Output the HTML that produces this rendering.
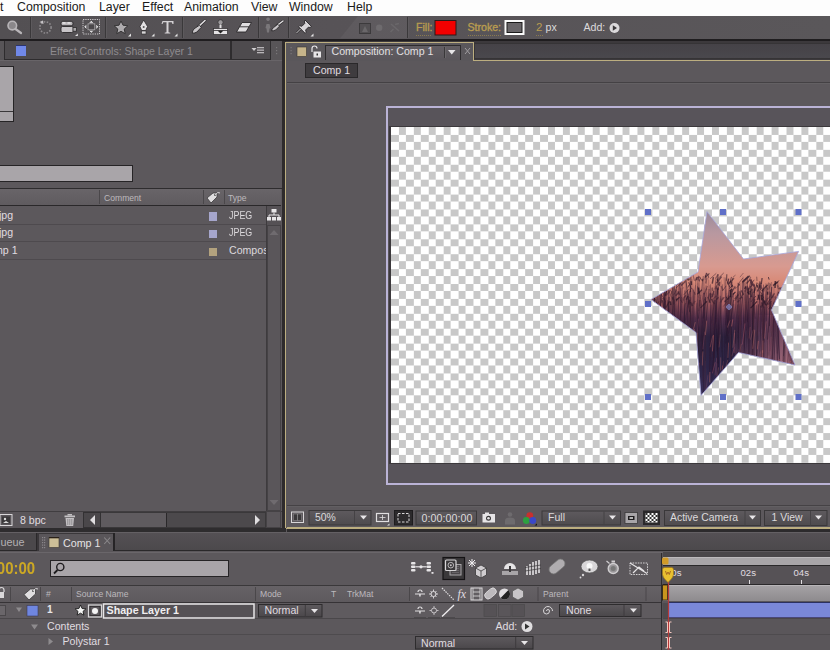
<!DOCTYPE html>
<html><head><meta charset="utf-8">
<style>
*{margin:0;padding:0;box-sizing:border-box}
html,body{width:830px;height:650px;overflow:hidden;background:#5c585c;font-family:"Liberation Sans",sans-serif}
.a{position:absolute}
.t{position:absolute;white-space:nowrap;line-height:1}
</style></head><body>
<!-- MENU -->
<div class="a" style="left:0;top:0;width:830px;height:16px;background:#fdfdfd"></div>
<div class="t" style="left:0px;top:1.3px;font-size:12.3px;color:#1a1a1a">t</div>
<div class="t" style="left:17px;top:1.3px;font-size:12.3px;color:#1a1a1a">Composition</div>
<div class="t" style="left:99px;top:1.3px;font-size:12.3px;color:#1a1a1a">Layer</div>
<div class="t" style="left:142px;top:1.3px;font-size:12.3px;color:#1a1a1a">Effect</div>
<div class="t" style="left:184px;top:1.3px;font-size:12.3px;color:#1a1a1a">Animation</div>
<div class="t" style="left:251px;top:1.3px;font-size:12.3px;color:#1a1a1a">View</div>
<div class="t" style="left:289px;top:1.3px;font-size:12.3px;color:#1a1a1a">Window</div>
<div class="t" style="left:347px;top:1.3px;font-size:12.3px;color:#1a1a1a">Help</div>

<!-- TOOLBAR -->
<div class="a" style="left:0;top:16px;width:830px;height:23px;background:linear-gradient(90deg,#535053,#575357 40%,#5a575a)"></div>
<div class="a" style="left:0;top:38.5px;width:830px;height:3px;background:#1f1d1f"></div>
<svg class="a" style="left:0;top:16px" width="830" height="23" viewBox="0 16 830 23">
<g fill="none" stroke="#3a383a" stroke-width="1">
<line x1="30.5" y1="17" x2="30.5" y2="38"/><line x1="105.5" y1="17" x2="105.5" y2="38"/>
<line x1="182.5" y1="17" x2="182.5" y2="38"/><line x1="258.5" y1="17" x2="258.5" y2="38"/>
<line x1="288.5" y1="17" x2="288.5" y2="38"/><line x1="407.5" y1="17" x2="407.5" y2="38"/>
</g>
<g fill="none" stroke="#5d5a5d" stroke-width="1">
<line x1="31.5" y1="17" x2="31.5" y2="38"/><line x1="106.5" y1="17" x2="106.5" y2="38"/>
<line x1="183.5" y1="17" x2="183.5" y2="38"/><line x1="259.5" y1="17" x2="259.5" y2="38"/>
<line x1="289.5" y1="17" x2="289.5" y2="38"/><line x1="408.5" y1="17" x2="408.5" y2="38"/>
</g>
<!-- magnifier -->
<circle cx="12.3" cy="25.6" r="4.3" fill="#8a878a" stroke="#b8b5b8" stroke-width="1.6"/>
<line x1="15.5" y1="29" x2="21" y2="33" stroke="#b8b5b8" stroke-width="2.2" stroke-linecap="round"/>
<!-- rotate -->
<circle cx="45.5" cy="27.4" r="5.6" fill="none" stroke="#8d8a8d" stroke-width="1.6" stroke-dasharray="1.5 1.5"/>
<path d="M39.5 22 l3.5 -1.5 l0.5 3.5z" fill="#c8c5c8"/>
<!-- camera -->
<rect x="61" y="21.3" width="12" height="4.5" rx="1.8" fill="#b8b5b8" stroke="#2a282a" stroke-width="0.9"/>
<rect x="62.5" y="22.2" width="3" height="1.5" fill="#e8e6e8"/><rect x="67.5" y="22.2" width="3" height="1.5" fill="#e8e6e8"/>
<rect x="61" y="26.5" width="12.3" height="6" rx="1.5" fill="#c8c5c8" stroke="#2a282a" stroke-width="0.9"/>
<path d="M73 27.5 h3.5 v3.8 h-3.5z" fill="#a8a5a8" stroke="#2a282a" stroke-width="0.8"/>
<path d="M75 36 l2.8 -2.6 v2.6z" fill="#e6e4e6"/>
<!-- pan behind -->
<rect x="83" y="19.5" width="16.5" height="14.5" fill="none" stroke="#c8c5c8" stroke-width="1" stroke-dasharray="1.3 1"/>
<path d="M91.3 20.3 l3 3 h-6z M91.3 33.3 l3 -3 h-6z M83.8 26.8 l3 -3 v6z M98.8 26.8 l-3 -3 v6z" fill="#dcdadc" stroke="#2a282a" stroke-width="0.6"/>
<rect x="88" y="23.8" width="6.8" height="6" fill="#4a474a" stroke="#a8a5a8" stroke-width="0.9"/>
<!-- star -->
<path d="M121 21 l2 4.2 4.8 0.6 -3.6 3.2 1 4.7 -4.2 -2.4 -4.2 2.4 1 -4.7 -3.6 -3.2 4.8 -0.6z" fill="#aeabae" stroke="#2e2c2e" stroke-width="0.9"/>
<path d="M128 36.5 l3 -3 v3z" fill="#e6e6e6"/>
<!-- pen -->
<path d="M143.7 20 l3.8 6.5 -1.8 4 h-4 l-1.8 -4z" fill="#e2e0e2" stroke="#2e2c2e" stroke-width="0.8"/>
<rect x="141.5" y="31" width="4.5" height="3" fill="#d8d6d8" stroke="#2e2c2e" stroke-width="0.6"/>
<circle cx="143.7" cy="27" r="1" fill="#555"/>
<path d="M151.5 36.5 l3 -3 v3z" fill="#e6e6e6"/>
<!-- T -->
<path d="M162.5 21 h11 v3 h-1 l-0.8 -1.8 h-3.2 v10 l1.8 0.6 v0.8 h-5.6 v-0.8 l1.8 -0.6 v-10 h-3.2 l-0.8 1.8 h-1z" fill="#d5d2d5"/>
<path d="M174.5 36.5 l3 -3 v3z" fill="#e6e6e6"/>
<polygon points="340,38.5 358,16 407,16 407,38.5" fill="#ffffff" opacity="0.045"/>
<!-- brush -->
<line x1="198.5" y1="26.5" x2="205" y2="20.5" stroke="#2a282a" stroke-width="2.8" stroke-linecap="round"/>
<line x1="198.5" y1="26.5" x2="205" y2="20.5" stroke="#e0dee0" stroke-width="1.7" stroke-linecap="round"/>
<path d="M199.3 25.3 l2 2 -4.5 4.8 q-2.8 1.5 -4.5 1 q-0.2 -2 1.8 -4.3z" fill="#c8c5c8" stroke="#2a282a" stroke-width="0.9"/>
<!-- stamp -->
<circle cx="220.5" cy="22.3" r="2.6" fill="#9c999c" stroke="#2e2c2e" stroke-width="0.7"/>
<rect x="219.5" y="24.5" width="2" height="4" fill="#e0dee0"/>
<rect x="213.5" y="28.5" width="14" height="6" fill="#e4e2e4" stroke="#2e2c2e" stroke-width="0.7"/>
<path d="M217.5 30.5 h6 l-3 3z" fill="#222"/>
<line x1="213.5" y1="30.5" x2="227.5" y2="30.5" stroke="#2e2c2e" stroke-width="0.8"/>
<!-- eraser -->
<path d="M242 22.5 h9.5 l-5.5 9.5 h-9.5z" fill="#e0dee0" stroke="#2a282a" stroke-width="0.9"/>
<line x1="239.7" y1="26.8" x2="249" y2="26.8" stroke="#2a282a" stroke-width="0.9"/>
<!-- roto brush -->
<path d="M268 21 a1.8 1.8 0 1 1 0.1 0 M266.5 24 h3 l1 4 -1 0.5 -0.5 4 h-2 l-0.5 -4 -1 -0.5z" fill="#7a777a"/>
<line x1="277" y1="25.5" x2="283" y2="21" stroke="#2a282a" stroke-width="2.6" stroke-linecap="round"/>
<line x1="277" y1="25.5" x2="283" y2="21" stroke="#e0dee0" stroke-width="1.5" stroke-linecap="round"/>
<path d="M277.8 24.3 l1.8 1.8 -3.8 3.8 q-2.4 1.2 -4.2 0.9 q0 -1.6 2 -3.3z" fill="#c8c5c8" stroke="#2a282a" stroke-width="0.9"/>
<!-- pin -->
<path d="M305 20 l6.5 6.5 -1.6 1.1 -1.3 -0.6 -3 3 0.6 2.2 -1.1 1.1 -6.5 -6.5 1.1 -1.1 2.2 0.6 3 -3 -0.6 -1.3z" fill="#d8d5d8" stroke="#2a282a" stroke-width="0.9"/>
<line x1="300.5" y1="29" x2="296.5" y2="33" stroke="#2a282a" stroke-width="2"/><line x1="300.5" y1="29" x2="296.5" y2="33" stroke="#d8d5d8" stroke-width="1"/>
<path d="M310.5 36.5 l3 -3 v3z" fill="#e6e6e6"/>
<!-- dim icons -->
<rect x="359.5" y="23.5" width="11" height="10" fill="#535053" stroke="#3c3a3c" stroke-width="1"/>
<path d="M362 32 l3 -6 3 6z" fill="#6a676a"/>
<circle cx="379.2" cy="27.8" r="3.2" fill="#6e6b6e"/>
<path d="M391 24 l8 7 M390.5 32 l3 -3 M395 24.5 l4 -1" stroke="#6a676a" stroke-width="1.6" fill="none"/>
<!-- fill / stroke -->
<rect x="435" y="20.5" width="21" height="14.5" fill="#f20000" stroke="#2a1a1a" stroke-width="1"/>
<rect x="504.5" y="20" width="20" height="15" fill="#fafafa"/>
<rect x="507" y="22.5" width="15" height="10" fill="#686568" stroke="#1a1a1a" stroke-width="1"/>
<circle cx="614.5" cy="28" r="5" fill="#dcdadc"/>
<path d="M612.8 25.2 l4.2 2.8 -4.2 2.8z" fill="#3a383a"/>
<line x1="416" y1="35.5" x2="432" y2="35.5" stroke="#8a7a50" stroke-width="1" stroke-dasharray="1 1"/>
<line x1="468" y1="35.5" x2="501" y2="35.5" stroke="#8a7a50" stroke-width="1" stroke-dasharray="1 1"/>
<line x1="536" y1="35.5" x2="543" y2="35.5" stroke="#8a7a50" stroke-width="1" stroke-dasharray="1 1"/>
</svg>
<div class="t" style="left:416px;top:22px;font-size:10.6px;color:#b89c50;-webkit-text-stroke:0.35px #b89c50">Fill:</div>
<div class="t" style="left:467.5px;top:22px;font-size:10.6px;color:#b89c50;-webkit-text-stroke:0.35px #b89c50">Stroke:</div>
<div class="t" style="left:536px;top:22px;font-size:11.5px;color:#b89c50">2</div>
<div class="t" style="left:545.5px;top:22px;font-size:10.6px;color:#dcdadc">px</div>
<div class="t" style="left:583.5px;top:22px;font-size:10.6px;color:#dcdadc">Add:</div>

<!-- LEFT PANEL -->
<div class="a" style="left:0;top:41px;width:282px;height:487px;background:#5c585c"></div>
<div class="a" style="left:0;top:41px;width:282px;height:19px;background:#585558"></div>
<div class="a" style="left:0;top:60px;width:282px;height:1px;background:#686468"></div>
<div class="a" style="left:4px;top:41.4px;width:227px;height:18.5px;background:#4e4b4e;border:1px solid #2e2c2e;border-top:none"></div>
<div class="a" style="left:16px;top:45px;width:9.5px;height:11px;background:#7088e8;border-top:1.8px solid #2a3470"></div>
<div class="t" style="left:50px;top:45.5px;font-size:10.5px;color:#8f8b8f">Effect Controls: Shape Layer 1</div>
<div class="a" style="left:231px;top:41.4px;width:40px;height:18.5px;background:#4e4b4e;border:1px solid #2e2c2e;border-top:none"></div>
<svg class="a" style="left:0;top:41px" width="282" height="19" viewBox="0 41 282 19">
<path d="M251.5 48 h5 l-2.5 3z" fill="#d0ced0"/>
<rect x="257" y="47" width="7" height="1.3" fill="#b8b5b8"/><rect x="257" y="49.5" width="7" height="1.3" fill="#b8b5b8"/><rect x="257" y="52" width="7" height="1.3" fill="#b8b5b8"/>
<g fill="#7a777a"><rect x="276" y="47" width="1.2" height="1.2"/><rect x="276" y="50" width="1.2" height="1.2"/><rect x="276" y="53" width="1.2" height="1.2"/></g>
</svg>
<!-- light boxes -->
<div class="a" style="left:-2px;top:66px;width:16px;height:56px;background:#a9a5a9;border:1px solid #262426"></div>
<div class="a" style="left:0;top:111px;width:13px;height:1px;background:#3a383a"></div>
<div class="a" style="left:-2px;top:164.5px;width:135px;height:17.5px;background:#a9a5a9;border:1px solid #262426"></div>
<!-- column header -->
<div class="a" style="left:0;top:187.5px;width:282px;height:1.2px;background:#2e2c2e"></div>
<div class="a" style="left:0;top:188.5px;width:281px;height:17px;background:linear-gradient(#686468,#5f5b5f)"></div>
<div class="a" style="left:0;top:205.3px;width:281px;height:1.2px;background:#2a282a"></div>
<div class="a" style="left:99px;top:190px;width:1px;height:14px;background:#4a474a"></div>
<div class="a" style="left:203px;top:190px;width:1px;height:14px;background:#4a474a"></div>
<div class="a" style="left:223.5px;top:190px;width:1px;height:14px;background:#4a474a"></div>
<div class="t" style="left:104px;top:193.8px;font-size:8.6px;color:#bdb9bd">Comment</div>
<div class="t" style="left:228px;top:193.8px;font-size:8.6px;color:#bdb9bd">Type</div>
<svg class="a" style="left:204px;top:190px" width="18" height="16" viewBox="0 0 18 16">
<path d="M3 8 l6 -5 h4 v4 l-6 6z" fill="#e0dee0" stroke="#3a383a" stroke-width="0.8"/><circle cx="11" cy="5" r="1" fill="#555"/><path d="M11 5 q3 -4 5 -2" stroke="#e0dee0" fill="none" stroke-width="0.9"/>
</svg>
<!-- rows -->
<div class="a" style="left:0;top:223.5px;width:266px;height:1px;background:#4e4a4e"></div>
<div class="a" style="left:0;top:241px;width:266px;height:1px;background:#4e4a4e"></div>
<div class="a" style="left:0;top:258.5px;width:266px;height:1px;background:#4e4a4e"></div>
<div class="t" style="left:-4px;top:210px;font-size:10.6px;color:#e0dde0">.jpg</div>
<div class="t" style="left:-4px;top:227px;font-size:10.6px;color:#e0dde0">.jpg</div>
<div class="t" style="left:-6px;top:245px;font-size:10.6px;color:#e0dde0">mp 1</div>
<div class="a" style="left:208.5px;top:212px;width:8.5px;height:8.5px;background:#a6a6cc"></div>
<div class="a" style="left:208.5px;top:229.5px;width:8.5px;height:8.5px;background:#a6a6cc"></div>
<div class="a" style="left:208.5px;top:247.5px;width:8.5px;height:8.5px;background:#b3a27e"></div>
<div class="t" style="left:229px;top:210px;font-size:10.6px;color:#dcd9dc;transform:scaleX(0.84);transform-origin:0 0">JPEG</div>
<div class="t" style="left:229px;top:227px;font-size:10.6px;color:#dcd9dc;transform:scaleX(0.84);transform-origin:0 0">JPEG</div>
<div class="t" style="left:229px;top:245px;font-size:10.6px;color:#dcd9dc;width:37px;overflow:hidden">Compos</div>
<!-- v scrollbar -->
<div class="a" style="left:266px;top:206px;width:15px;height:305px;background:#555155;border-left:1px solid #3e3b3e"></div>
<div class="a" style="left:267px;top:224.5px;width:14px;height:286px;background:#5a565a;border:1px solid #454245"></div>
<svg class="a" style="left:266px;top:206px" width="16" height="305" viewBox="0 0 16 305">
<rect x="5.5" y="3" width="5" height="3.5" fill="#e8e6e8"/><path d="M8 6.5 v2.5 M3 11 v-2 h10 v2" stroke="#e8e6e8" fill="none" stroke-width="1"/>
<rect x="1" y="11" width="4" height="3.5" fill="#e8e6e8"/><rect x="6" y="11" width="4" height="3.5" fill="#e8e6e8"/><rect x="11" y="11" width="4" height="3.5" fill="#e8e6e8"/>
<path d="M3.5 29 l4.5 -5 4.5 5z" fill="#6f6b6f"/>
<path d="M3.5 294 l4.5 5 4.5 -5z" fill="#6f6b6f"/>
</svg>
<!-- bottom bar -->
<div class="a" style="left:0;top:511px;width:282px;height:1px;background:#403d40"></div>
<div class="a" style="left:0;top:512px;width:282px;height:16px;background:#5a565a"></div>
<svg class="a" style="left:0;top:512px" width="282" height="16" viewBox="0 512 282 16">
<rect x="0" y="514.5" width="12" height="11" fill="none" stroke="#dad8da" stroke-width="1"/>
<rect x="2" y="516.5" width="8" height="7" fill="#3a383a"/><circle cx="5" cy="519" r="1.2" fill="#ddd"/><path d="M3 523 l3 -2 3 2z" fill="#ddd"/>
<g fill="#c4c1c4"><rect x="64.5" y="515.5" width="10.5" height="1.8"/><rect x="67.5" y="514" width="4.5" height="1.5"/><path d="M65.5 518 h8.5 l-0.8 8 h-6.9z"/></g>
<g stroke="#7a777a" stroke-width="0.7"><line x1="67.8" y1="519" x2="67.8" y2="525"/><line x1="69.8" y1="519" x2="69.8" y2="525"/><line x1="71.8" y1="519" x2="71.8" y2="525"/></g>
</svg>
<div class="t" style="left:20px;top:515px;font-size:10.6px;color:#e0dde0">8 bpc</div>
<div class="a" style="left:82.5px;top:512px;width:183.5px;height:15.5px;background:#4c494c;border:1px solid #3a383a"></div>
<div class="a" style="left:82.5px;top:512px;width:18px;height:15.5px;background:#4a474a;border:1px solid #333133"></div>
<div class="a" style="left:101px;top:512.5px;width:65.5px;height:14.5px;background:#5f5b5f;border-right:1px solid #2a282a"></div>
<svg class="a" style="left:82px;top:512px" width="184" height="16" viewBox="82 512 184 16">
<path d="M95 515 l-5 5 5 5z" fill="#e0dee0"/><path d="M255 515 l5 5 -5 5z" fill="#e0dee0"/>
</svg>
<div class="a" style="left:266px;top:511px;width:15px;height:17px;background:#5a565a;border:1px solid #454245"></div>
<div class="a" style="left:282px;top:41px;width:3.5px;height:492px;background:#2e2b2c"></div>

<!-- COMP PANEL -->
<div class="a" style="left:286px;top:41px;width:544px;height:19px;background:#3c393c"></div>
<div class="a" style="left:474px;top:43px;width:356px;height:16px;background:linear-gradient(#454247,#4a484d)"></div>
<div class="a" style="left:285.3px;top:42px;width:188.7px;height:20px;background:#5a575b;border:1.7px solid #bcae80;border-bottom:none"></div>
<div class="a" style="left:474px;top:43px;width:356px;height:16px;border:1px solid #363436;border-right:none"></div>
<div class="a" style="left:472.5px;top:59.5px;width:358px;height:1.5px;background:#bcae80"></div>
<div class="a" style="left:285.3px;top:61px;width:545px;height:467.5px;background:#5c585c;border-left:1.7px solid #bcae80;border-bottom:1.5px solid #bcae80"></div>
<svg class="a" style="left:286px;top:42px" width="190" height="18" viewBox="286 42 190 18">
<g fill="#7a777a"><rect x="290.5" y="47" width="1.2" height="1.2"/><rect x="290.5" y="50" width="1.2" height="1.2"/><rect x="290.5" y="53" width="1.2" height="1.2"/></g>
<rect x="297" y="47" width="9.5" height="9.5" fill="#c6b48a" stroke="#3a3632" stroke-width="0.6"/>
<path d="M312 52 v-3.5 a2.5 2.5 0 0 1 5 0" fill="none" stroke="#e8e6e8" stroke-width="1.2"/>
<rect x="313.5" y="51.5" width="7.5" height="6" fill="#e8e6e8"/><rect x="316.5" y="53.5" width="1.5" height="2" fill="#333"/>
</svg>
<div class="a" style="left:324.5px;top:44.5px;width:136.5px;height:15.5px;background:linear-gradient(#625e63,#5a565b);border:1px solid #2e2c2e;border-bottom:none"></div>
<div class="t" style="left:331.5px;top:45.7px;font-size:10.6px;color:#e2e0e2">Composition: Comp 1</div>
<div class="a" style="left:444px;top:47px;width:1px;height:11px;background:#3a383a"></div>
<div class="a" style="left:445px;top:47px;width:1px;height:11px;background:#6a676a"></div>
<svg class="a" style="left:446px;top:45px" width="30" height="15" viewBox="446 45 30 15">
<path d="M448 50 h7.5 l-3.75 4.5z" fill="#e8e6e8"/>
<path d="M465 48 l5 6 M470 48 l-5 6" stroke="#a09da0" stroke-width="1"/>
</svg>
<div class="a" style="left:304.5px;top:63px;width:53.5px;height:15px;background:#3f3c3f;border:1px solid #2a282a"></div>
<div class="t" style="left:313px;top:65px;font-size:10.6px;color:#e0dde0">Comp 1</div>
<div class="a" style="left:286.5px;top:82px;width:544px;height:1px;background:#444144"></div>
<div class="a" style="left:286.5px;top:83px;width:544px;height:1px;background:#636063"></div>
<!-- frame -->
<div class="a" style="left:386px;top:105.5px;width:460px;height:379px;border:2.3px solid #bab3d6;background:#58545a"></div>
<div class="a" style="left:388.8px;top:125.5px;width:450px;height:338.5px;background:#3c393c"></div>
<div class="a" style="left:390.5px;top:127px;width:440px;height:335.6px;background-color:#fff;background-image:conic-gradient(#c8c8c8 25%,#fff 25% 50%,#c8c8c8 50% 75%,#fff 75%);background-size:14.91px 14.91px"></div>
<!-- STAR -->
<svg class="a" style="left:640px;top:200px" width="190" height="210" viewBox="640 200 190 210">
<defs>
<clipPath id="stc"><polygon points="707,211.6 743.5,259 798.6,251.4 771.5,310 795,365 738.5,352.5 701,395.5 696,332.5 651,299.5 698,272"/></clipPath>
<linearGradient id="stg" x1="0" y1="211" x2="0" y2="396" gradientUnits="userSpaceOnUse">
<stop offset="0" stop-color="#9a8a9a"/><stop offset="0.12" stop-color="#b898a0"/><stop offset="0.3" stop-color="#d89a90"/>
<stop offset="0.38" stop-color="#d88a78"/><stop offset="0.5" stop-color="#b06466"/><stop offset="0.58" stop-color="#5a3450"/><stop offset="0.68" stop-color="#2e2440"/><stop offset="0.85" stop-color="#2e2648"/><stop offset="1" stop-color="#3a3058"/>
</linearGradient>
<linearGradient id="stg2" x1="745" y1="320" x2="795" y2="365" gradientUnits="userSpaceOnUse"><stop offset="0" stop-color="#b86a80" stop-opacity="0"/><stop offset="0.5" stop-color="#b87080" stop-opacity="0.5"/><stop offset="1" stop-color="#d08890" stop-opacity="0.8"/></linearGradient>
<filter id="hb"><feGaussianBlur stdDeviation="0.5"/></filter>
</defs>
<g clip-path="url(#stc)">
<rect x="640" y="200" width="190" height="210" fill="url(#stg)"/>
<rect x="735" y="315" width="65" height="55" fill="url(#stg2)"/>
<path d="M742.7 297.5 l3.4 92.6" stroke="#2a1830" stroke-width="0.76" opacity="0.72"/><path d="M775.7 304.6 l-5.5 46.2" stroke="#3a2038" stroke-width="0.44" opacity="0.47"/><path d="M705.9 279.0 l1.3 46.2" stroke="#4a2838" stroke-width="0.57" opacity="0.38"/><path d="M672.3 299.1 l0.2 36.8" stroke="#2a1830" stroke-width="0.42" opacity="0.30"/><path d="M679.8 282.2 l2.7 108.5" stroke="#3a2038" stroke-width="0.51" opacity="0.73"/><path d="M675.6 304.1 l3.7 41.7" stroke="#4a2838" stroke-width="0.56" opacity="0.31"/><path d="M673.2 280.2 l-3.0 30.5" stroke="#1e1428" stroke-width="0.68" opacity="0.30"/><path d="M658.0 286.3 l1.0 51.0" stroke="#3a2038" stroke-width="0.45" opacity="0.51"/><path d="M656.7 304.3 l1.5 26.9" stroke="#4a2838" stroke-width="0.81" opacity="0.31"/><path d="M703.7 292.8 l-5.5 25.8" stroke="#3a2038" stroke-width="0.45" opacity="0.73"/><path d="M666.1 283.1 l-1.4 94.7" stroke="#1e1428" stroke-width="0.63" opacity="0.70"/><path d="M765.9 283.3 l2.0 88.6" stroke="#2a1830" stroke-width="0.82" opacity="0.32"/><path d="M679.7 290.9 l-4.5 55.8" stroke="#2a1830" stroke-width="0.50" opacity="0.62"/><path d="M695.5 285.2 l-5.2 40.1" stroke="#4a2838" stroke-width="0.43" opacity="0.61"/><path d="M672.6 277.4 l-0.7 108.9" stroke="#1e1428" stroke-width="0.57" opacity="0.41"/><path d="M773.6 294.9 l-5.4 60.8" stroke="#4a2838" stroke-width="0.85" opacity="0.31"/><path d="M698.8 282.0 l-0.4 108.4" stroke="#4a2838" stroke-width="0.42" opacity="0.70"/><path d="M664.2 288.6 l2.4 37.7" stroke="#3a2038" stroke-width="0.51" opacity="0.50"/><path d="M796.4 299.4 l1.3 66.5" stroke="#4a2838" stroke-width="0.61" opacity="0.43"/><path d="M785.1 287.3 l-0.7 94.9" stroke="#1e1428" stroke-width="0.45" opacity="0.72"/><path d="M675.4 290.3 l-0.5 68.8" stroke="#1e1428" stroke-width="0.63" opacity="0.33"/><path d="M753.6 297.0 l-2.4 89.6" stroke="#4a2838" stroke-width="0.74" opacity="0.43"/><path d="M688.3 304.4 l3.6 85.9" stroke="#2a1830" stroke-width="0.54" opacity="0.38"/><path d="M720.1 298.4 l-3.3 52.7" stroke="#1e1428" stroke-width="0.51" opacity="0.53"/><path d="M700.9 294.7 l2.3 87.7" stroke="#4a2838" stroke-width="0.54" opacity="0.68"/><path d="M796.4 314.0 l-0.7 69.0" stroke="#4a2838" stroke-width="0.44" opacity="0.68"/><path d="M691.0 278.3 l-1.8 82.0" stroke="#4a2838" stroke-width="0.69" opacity="0.72"/><path d="M694.0 292.0 l-3.3 98.7" stroke="#4a2838" stroke-width="0.90" opacity="0.39"/><path d="M742.9 281.2 l-4.2 89.5" stroke="#3a2038" stroke-width="0.75" opacity="0.74"/><path d="M673.2 301.9 l3.7 34.4" stroke="#4a2838" stroke-width="0.62" opacity="0.55"/><path d="M718.7 287.0 l-0.1 77.0" stroke="#2a1830" stroke-width="0.48" opacity="0.71"/><path d="M701.3 303.6 l2.7 97.7" stroke="#2a1830" stroke-width="0.73" opacity="0.55"/><path d="M731.6 284.7 l-0.9 50.1" stroke="#1e1428" stroke-width="0.87" opacity="0.43"/><path d="M772.4 293.6 l0.4 94.1" stroke="#4a2838" stroke-width="0.55" opacity="0.36"/><path d="M733.7 303.8 l0.1 107.3" stroke="#2a1830" stroke-width="0.54" opacity="0.70"/><path d="M706.0 285.5 l-0.6 102.9" stroke="#4a2838" stroke-width="0.53" opacity="0.69"/><path d="M713.2 304.3 l-1.2 66.9" stroke="#3a2038" stroke-width="0.74" opacity="0.47"/><path d="M738.6 283.5 l-1.0 108.4" stroke="#1e1428" stroke-width="0.58" opacity="0.44"/><path d="M722.7 284.3 l-4.8 65.5" stroke="#1e1428" stroke-width="0.69" opacity="0.50"/><path d="M654.1 280.0 l-1.2 58.4" stroke="#4a2838" stroke-width="0.66" opacity="0.41"/><path d="M766.8 287.5 l-4.5 47.8" stroke="#4a2838" stroke-width="0.89" opacity="0.43"/><path d="M726.8 301.0 l3.0 99.9" stroke="#1e1428" stroke-width="0.36" opacity="0.36"/><path d="M729.1 285.7 l-0.7 50.2" stroke="#3a2038" stroke-width="0.61" opacity="0.46"/><path d="M653.5 283.3 l3.2 63.7" stroke="#2a1830" stroke-width="0.84" opacity="0.55"/><path d="M713.3 299.4 l0.9 75.6" stroke="#4a2838" stroke-width="0.87" opacity="0.59"/><path d="M720.3 295.8 l3.0 86.2" stroke="#1e1428" stroke-width="0.61" opacity="0.64"/><path d="M775.1 302.2 l-3.1 61.8" stroke="#3a2038" stroke-width="0.78" opacity="0.71"/><path d="M673.1 296.2 l3.7 100.5" stroke="#2a1830" stroke-width="0.65" opacity="0.49"/><path d="M658.4 282.7 l1.9 94.7" stroke="#4a2838" stroke-width="0.71" opacity="0.31"/><path d="M796.8 315.3 l-5.5 84.6" stroke="#2a1830" stroke-width="0.81" opacity="0.40"/><path d="M756.3 282.2 l3.2 49.9" stroke="#4a2838" stroke-width="0.43" opacity="0.57"/><path d="M769.9 282.9 l-0.4 43.1" stroke="#1e1428" stroke-width="0.71" opacity="0.64"/><path d="M656.7 292.7 l2.8 88.1" stroke="#1e1428" stroke-width="0.42" opacity="0.49"/><path d="M752.2 291.6 l0.6 55.0" stroke="#1e1428" stroke-width="0.85" opacity="0.36"/><path d="M671.0 294.3 l3.1 68.0" stroke="#1e1428" stroke-width="0.66" opacity="0.58"/><path d="M657.6 282.8 l-3.2 95.8" stroke="#1e1428" stroke-width="0.89" opacity="0.66"/><path d="M716.9 287.3 l-5.8 36.2" stroke="#2a1830" stroke-width="0.54" opacity="0.56"/><path d="M661.9 279.6 l-3.6 75.5" stroke="#1e1428" stroke-width="0.83" opacity="0.52"/><path d="M664.4 291.4 l-2.2 71.1" stroke="#4a2838" stroke-width="0.82" opacity="0.73"/><path d="M751.5 283.8 l3.7 34.9" stroke="#3a2038" stroke-width="0.72" opacity="0.67"/><path d="M754.6 288.8 l-3.1 96.0" stroke="#4a2838" stroke-width="0.86" opacity="0.62"/><path d="M705.5 297.0 l-3.0 55.5" stroke="#1e1428" stroke-width="0.70" opacity="0.73"/><path d="M726.7 293.2 l1.4 73.7" stroke="#2a1830" stroke-width="0.57" opacity="0.34"/><path d="M676.3 281.7 l3.4 66.7" stroke="#4a2838" stroke-width="0.71" opacity="0.46"/><path d="M719.5 301.8 l-1.7 77.7" stroke="#3a2038" stroke-width="0.61" opacity="0.34"/><path d="M747.3 278.5 l2.7 98.9" stroke="#2a1830" stroke-width="0.61" opacity="0.55"/><path d="M690.2 280.7 l-3.6 49.4" stroke="#1e1428" stroke-width="0.62" opacity="0.31"/><path d="M696.0 277.7 l-1.4 26.8" stroke="#1e1428" stroke-width="0.82" opacity="0.37"/><path d="M692.2 295.6 l-4.4 87.0" stroke="#3a2038" stroke-width="0.46" opacity="0.31"/><path d="M747.8 294.5 l1.1 102.5" stroke="#1e1428" stroke-width="0.72" opacity="0.38"/><path d="M691.0 297.2 l-4.4 86.0" stroke="#2a1830" stroke-width="0.48" opacity="0.60"/><path d="M746.2 288.7 l-5.9 107.9" stroke="#4a2838" stroke-width="0.38" opacity="0.65"/><path d="M673.8 277.0 l2.4 96.0" stroke="#2a1830" stroke-width="0.66" opacity="0.72"/><path d="M684.0 299.3 l-1.3 32.8" stroke="#4a2838" stroke-width="0.73" opacity="0.59"/><path d="M708.4 277.7 l-1.9 46.7" stroke="#2a1830" stroke-width="0.52" opacity="0.32"/><path d="M792.4 291.1 l0.4 84.1" stroke="#1e1428" stroke-width="0.45" opacity="0.41"/><path d="M768.2 283.2 l-4.4 108.7" stroke="#2a1830" stroke-width="0.39" opacity="0.63"/><path d="M715.1 286.4 l1.7 61.0" stroke="#2a1830" stroke-width="0.64" opacity="0.36"/><path d="M786.8 293.3 l2.3 63.2" stroke="#1e1428" stroke-width="0.47" opacity="0.35"/><path d="M721.4 298.6 l-2.0 47.4" stroke="#4a2838" stroke-width="0.42" opacity="0.54"/><path d="M685.2 278.4 l-0.2 61.4" stroke="#3a2038" stroke-width="0.48" opacity="0.33"/><path d="M655.3 281.8 l-2.3 49.3" stroke="#1e1428" stroke-width="0.40" opacity="0.49"/><path d="M705.7 298.3 l-3.1 25.0" stroke="#2a1830" stroke-width="0.87" opacity="0.36"/><path d="M715.2 299.7 l3.5 80.7" stroke="#1e1428" stroke-width="0.75" opacity="0.62"/><path d="M664.2 299.4 l-2.8 72.8" stroke="#4a2838" stroke-width="0.52" opacity="0.36"/><path d="M750.7 285.4 l1.6 30.4" stroke="#2a1830" stroke-width="0.66" opacity="0.31"/><path d="M795.4 310.0 l-3.4 62.1" stroke="#4a2838" stroke-width="0.87" opacity="0.31"/><path d="M667.0 281.8 l-4.4 55.5" stroke="#2a1830" stroke-width="0.69" opacity="0.37"/><path d="M688.8 293.6 l-4.6 78.6" stroke="#4a2838" stroke-width="0.77" opacity="0.50"/><path d="M666.0 285.2 l-1.4 102.8" stroke="#3a2038" stroke-width="0.59" opacity="0.50"/><path d="M729.0 304.1 l-5.0 75.7" stroke="#2a1830" stroke-width="0.80" opacity="0.49"/><path d="M679.5 276.0 l-3.6 102.3" stroke="#4a2838" stroke-width="0.74" opacity="0.46"/><path d="M680.8 284.0 l-0.4 42.1" stroke="#3a2038" stroke-width="0.55" opacity="0.64"/><path d="M703.7 299.5 l0.6 94.2" stroke="#4a2838" stroke-width="0.85" opacity="0.33"/><path d="M708.9 280.1 l-1.1 95.7" stroke="#2a1830" stroke-width="0.37" opacity="0.38"/><path d="M762.5 287.7 l2.0 103.3" stroke="#4a2838" stroke-width="0.77" opacity="0.51"/><path d="M779.2 300.9 l-2.2 93.0" stroke="#3a2038" stroke-width="0.36" opacity="0.53"/><path d="M771.6 282.0 l0.1 82.6" stroke="#4a2838" stroke-width="0.63" opacity="0.53"/><path d="M716.4 298.8 l3.3 74.2" stroke="#3a2038" stroke-width="0.66" opacity="0.33"/><path d="M769.4 291.4 l0.8 75.5" stroke="#2a1830" stroke-width="0.64" opacity="0.43"/><path d="M652.2 298.4 l2.6 76.9" stroke="#2a1830" stroke-width="0.87" opacity="0.49"/><path d="M689.7 296.8 l1.5 31.1" stroke="#1e1428" stroke-width="0.72" opacity="0.73"/><path d="M752.5 301.8 l0.1 87.8" stroke="#2a1830" stroke-width="0.46" opacity="0.53"/><path d="M684.3 304.3 l-2.1 71.2" stroke="#3a2038" stroke-width="0.35" opacity="0.48"/><path d="M762.1 294.7 l0.8 42.6" stroke="#1e1428" stroke-width="0.53" opacity="0.45"/><path d="M685.9 278.9 l2.0 50.0" stroke="#3a2038" stroke-width="0.79" opacity="0.34"/><path d="M659.7 288.0 l0.6 40.8" stroke="#4a2838" stroke-width="0.66" opacity="0.58"/><path d="M711.4 288.3 l3.0 69.9" stroke="#1e1428" stroke-width="0.52" opacity="0.43"/><path d="M676.5 276.9 l-0.4 34.8" stroke="#3a2038" stroke-width="0.68" opacity="0.38"/><path d="M697.6 279.0 l-2.7 91.9" stroke="#3a2038" stroke-width="0.39" opacity="0.73"/><path d="M774.9 309.7 l2.5 52.1" stroke="#3a2038" stroke-width="0.70" opacity="0.72"/><path d="M783.8 301.6 l2.4 92.8" stroke="#2a1830" stroke-width="0.35" opacity="0.60"/><path d="M662.1 280.4 l-5.0 77.3" stroke="#3a2038" stroke-width="0.77" opacity="0.63"/><path d="M756.4 305.1 l0.3 106.3" stroke="#2a1830" stroke-width="0.88" opacity="0.35"/><path d="M771.8 287.0 l-4.3 52.6" stroke="#2a1830" stroke-width="0.84" opacity="0.74"/><path d="M685.4 303.3 l-5.9 64.6" stroke="#3a2038" stroke-width="0.89" opacity="0.73"/><path d="M751.9 291.8 l3.5 106.8" stroke="#1e1428" stroke-width="0.39" opacity="0.64"/><path d="M650.4 299.5 l1.5 109.9" stroke="#3a2038" stroke-width="0.46" opacity="0.45"/><path d="M692.2 290.5 l1.9 84.2" stroke="#1e1428" stroke-width="0.67" opacity="0.43"/><path d="M791.3 287.1 l-3.8 61.8" stroke="#2a1830" stroke-width="0.89" opacity="0.42"/><path d="M670.2 304.1 l-1.7 72.0" stroke="#3a2038" stroke-width="0.45" opacity="0.68"/><path d="M662.0 286.3 l-5.9 93.9" stroke="#2a1830" stroke-width="0.77" opacity="0.46"/><path d="M651.2 292.3 l2.7 106.3" stroke="#3a2038" stroke-width="0.39" opacity="0.74"/><path d="M796.1 299.1 l-5.1 65.1" stroke="#4a2838" stroke-width="0.50" opacity="0.73"/><path d="M725.2 277.5 l1.8 58.4" stroke="#2a1830" stroke-width="0.59" opacity="0.57"/><path d="M680.8 288.2 l2.1 86.5" stroke="#4a2838" stroke-width="0.80" opacity="0.49"/><path d="M650.3 299.7 l-2.6 39.2" stroke="#2a1830" stroke-width="0.52" opacity="0.39"/><path d="M799.1 293.1 l-3.3 60.8" stroke="#2a1830" stroke-width="0.61" opacity="0.43"/><path d="M764.9 302.0 l0.9 31.5" stroke="#3a2038" stroke-width="0.37" opacity="0.48"/><path d="M677.9 276.5 l3.6 95.4" stroke="#3a2038" stroke-width="0.68" opacity="0.36"/><path d="M659.7 286.6 l-5.9 77.6" stroke="#3a2038" stroke-width="0.80" opacity="0.34"/><path d="M762.6 290.3 l-4.5 90.9" stroke="#2a1830" stroke-width="0.64" opacity="0.74"/><path d="M691.1 279.1 l-3.0 59.0" stroke="#4a2838" stroke-width="0.85" opacity="0.55"/><path d="M794.8 292.9 l-3.4 73.3" stroke="#3a2038" stroke-width="0.65" opacity="0.63"/><path d="M684.1 295.3 l-5.8 29.8" stroke="#3a2038" stroke-width="0.47" opacity="0.40"/><path d="M768.5 282.3 l-5.6 67.5" stroke="#2a1830" stroke-width="0.56" opacity="0.46"/><path d="M732.8 288.7 l-4.8 33.7" stroke="#1e1428" stroke-width="0.85" opacity="0.56"/><path d="M756.4 305.5 l3.9 105.7" stroke="#2a1830" stroke-width="0.52" opacity="0.37"/><path d="M746.0 277.8 l0.2 43.0" stroke="#1e1428" stroke-width="0.40" opacity="0.53"/><path d="M774.1 285.8 l-1.1 54.8" stroke="#4a2838" stroke-width="0.66" opacity="0.39"/><path d="M654.4 297.5 l2.9 34.9" stroke="#1e1428" stroke-width="0.56" opacity="0.45"/><path d="M721.6 280.2 l-3.5 35.6" stroke="#3a2038" stroke-width="0.36" opacity="0.41"/><path d="M743.6 283.1 l2.8 47.4" stroke="#3a2038" stroke-width="0.59" opacity="0.70"/><path d="M738.3 292.4 l-2.4 101.6" stroke="#4a2838" stroke-width="0.42" opacity="0.51"/><path d="M750.5 295.9 l-1.9 27.2" stroke="#4a2838" stroke-width="0.58" opacity="0.54"/><path d="M741.0 282.4 l-4.9 105.7" stroke="#2a1830" stroke-width="0.39" opacity="0.61"/><path d="M654.5 296.8 l-0.8 50.8" stroke="#1e1428" stroke-width="0.65" opacity="0.68"/><path d="M666.3 297.9 l-3.0 47.0" stroke="#4a2838" stroke-width="0.35" opacity="0.64"/><path d="M718.8 280.5 l-3.4 43.4" stroke="#2a1830" stroke-width="0.87" opacity="0.39"/><path d="M670.8 304.8 l-1.6 79.4" stroke="#3a2038" stroke-width="0.63" opacity="0.48"/><path d="M669.1 290.2 l-1.5 83.4" stroke="#3a2038" stroke-width="0.67" opacity="0.71"/><path d="M713.9 292.3 l3.5 67.7" stroke="#3a2038" stroke-width="0.47" opacity="0.41"/><path d="M711.8 298.7 l-3.1 96.1" stroke="#1e1428" stroke-width="0.41" opacity="0.42"/><path d="M776.6 297.3 l1.1 66.4" stroke="#2a1830" stroke-width="0.40" opacity="0.67"/><path d="M699.1 279.0 l2.4 78.7" stroke="#4a2838" stroke-width="0.67" opacity="0.32"/><path d="M674.2 285.7 l-5.0 90.1" stroke="#1e1428" stroke-width="0.82" opacity="0.70"/><path d="M657.8 296.8 l2.7 59.9" stroke="#3a2038" stroke-width="0.38" opacity="0.44"/><path d="M654.0 278.7 l3.6 87.7" stroke="#2a1830" stroke-width="0.57" opacity="0.51"/><path d="M682.4 276.8 l-3.1 73.0" stroke="#1e1428" stroke-width="0.41" opacity="0.53"/><path d="M791.8 298.9 l1.7 33.7" stroke="#2a1830" stroke-width="0.41" opacity="0.54"/><path d="M747.5 295.8 l-4.9 57.3" stroke="#4a2838" stroke-width="0.52" opacity="0.50"/><path d="M654.0 301.6 l-4.7 108.4" stroke="#3a2038" stroke-width="0.71" opacity="0.38"/><path d="M697.5 299.5 l-4.6 70.0" stroke="#4a2838" stroke-width="0.38" opacity="0.72"/><path d="M694.6 292.0 l0.4 92.8" stroke="#1e1428" stroke-width="0.49" opacity="0.37"/><path d="M717.4 287.7 l-5.0 85.4" stroke="#2a1830" stroke-width="0.68" opacity="0.51"/><path d="M715.7 282.8 l0.4 46.2" stroke="#4a2838" stroke-width="0.75" opacity="0.42"/><path d="M778.3 287.4 l-4.9 84.4" stroke="#1e1428" stroke-width="0.67" opacity="0.41"/><path d="M754.1 293.5 l-3.9 72.2" stroke="#4a2838" stroke-width="0.36" opacity="0.56"/><path d="M745.1 290.2 l3.2 99.3" stroke="#1e1428" stroke-width="0.51" opacity="0.45"/><path d="M668.2 288.2 l3.8 60.2" stroke="#2a1830" stroke-width="0.42" opacity="0.59"/><path d="M648.2 303.4 l2.5 51.6" stroke="#4a2838" stroke-width="0.71" opacity="0.49"/><path d="M699.7 297.2 l1.1 67.9" stroke="#3a2038" stroke-width="0.69" opacity="0.66"/><path d="M735.7 294.9 l-1.2 70.8" stroke="#3a2038" stroke-width="0.61" opacity="0.47"/><path d="M729.4 289.9 l-4.0 35.2" stroke="#3a2038" stroke-width="0.89" opacity="0.68"/><path d="M749.2 288.4 l-1.8 33.7" stroke="#2a1830" stroke-width="0.82" opacity="0.59"/><path d="M679.2 282.8 l3.3 30.7" stroke="#3a2038" stroke-width="0.56" opacity="0.56"/><path d="M759.8 289.8 l1.6 75.7" stroke="#2a1830" stroke-width="0.59" opacity="0.61"/><path d="M783.6 299.1 l-1.7 25.2" stroke="#3a2038" stroke-width="0.60" opacity="0.39"/><path d="M664.2 289.3 l2.0 62.3" stroke="#2a1830" stroke-width="0.61" opacity="0.53"/><path d="M764.9 300.3 l-1.3 77.1" stroke="#3a2038" stroke-width="0.69" opacity="0.57"/><path d="M651.1 301.7 l-4.0 109.1" stroke="#2a1830" stroke-width="0.39" opacity="0.45"/><path d="M729.2 301.7 l-2.0 39.6" stroke="#3a2038" stroke-width="0.37" opacity="0.33"/><path d="M758.8 290.0 l3.5 39.1" stroke="#3a2038" stroke-width="0.84" opacity="0.61"/><path d="M668.1 302.1 l3.6 37.5" stroke="#3a2038" stroke-width="0.50" opacity="0.54"/><path d="M753.4 302.6 l1.6 83.0" stroke="#4a2838" stroke-width="0.83" opacity="0.71"/><path d="M773.2 307.7 l2.3 72.7" stroke="#3a2038" stroke-width="0.75" opacity="0.63"/><path d="M697.8 283.3 l1.7 83.0" stroke="#3a2038" stroke-width="0.46" opacity="0.54"/><path d="M703.6 278.7 l-2.4 76.5" stroke="#2a1830" stroke-width="0.43" opacity="0.43"/><path d="M730.7 296.5 l1.4 105.6" stroke="#1e1428" stroke-width="0.74" opacity="0.51"/><path d="M758.4 304.4 l-2.3 66.5" stroke="#1e1428" stroke-width="0.89" opacity="0.63"/><path d="M763.1 293.5 l-1.5 93.3" stroke="#4a2838" stroke-width="0.86" opacity="0.57"/><path d="M673.9 288.4 l2.2 62.4" stroke="#2a1830" stroke-width="0.48" opacity="0.43"/><path d="M766.0 294.2 l0.5 32.1" stroke="#1e1428" stroke-width="0.52" opacity="0.34"/><path d="M709.9 285.3 l1.8 97.8" stroke="#2a1830" stroke-width="0.52" opacity="0.60"/><path d="M788.9 310.6 l2.7 90.0" stroke="#4a2838" stroke-width="0.72" opacity="0.34"/><path d="M726.0 289.6 l-4.5 62.7" stroke="#2a1830" stroke-width="0.50" opacity="0.50"/><path d="M795.4 301.1 l2.3 99.9" stroke="#4a2838" stroke-width="0.67" opacity="0.33"/><path d="M692.4 278.8 l3.5 54.4" stroke="#3a2038" stroke-width="0.40" opacity="0.45"/><path d="M702.1 279.0 l2.3 52.6" stroke="#4a2838" stroke-width="0.62" opacity="0.32"/><path d="M754.5 304.9 l2.9 75.6" stroke="#1e1428" stroke-width="0.52" opacity="0.51"/><path d="M726.0 278.7 l2.8 68.4" stroke="#4a2838" stroke-width="0.58" opacity="0.39"/><path d="M790.0 288.6 l-2.8 30.4" stroke="#4a2838" stroke-width="0.37" opacity="0.65"/><path d="M739.7 293.1 l-1.5 39.9" stroke="#2a1830" stroke-width="0.75" opacity="0.32"/><path d="M737.6 296.3 l3.2 29.1" stroke="#4a2838" stroke-width="0.51" opacity="0.43"/><path d="M747.8 277.6 l-4.4 63.8" stroke="#4a2838" stroke-width="0.53" opacity="0.61"/><path d="M775.9 300.2 l-4.2 97.0" stroke="#2a1830" stroke-width="0.61" opacity="0.44"/><path d="M664.9 301.7 l1.8 56.5" stroke="#4a2838" stroke-width="0.87" opacity="0.72"/><path d="M709.1 289.0 l-4.6 47.5" stroke="#1e1428" stroke-width="0.79" opacity="0.54"/><path d="M690.2 281.0 l3.3 60.0" stroke="#3a2038" stroke-width="0.57" opacity="0.41"/><path d="M714.5 293.8 l-3.1 63.6" stroke="#4a2838" stroke-width="0.37" opacity="0.67"/><path d="M685.0 290.5 l-1.0 74.4" stroke="#1e1428" stroke-width="0.85" opacity="0.65"/><path d="M663.1 285.8 l2.5 54.5" stroke="#2a1830" stroke-width="0.36" opacity="0.39"/><path d="M689.5 291.3 l-3.8 28.9" stroke="#3a2038" stroke-width="0.89" opacity="0.65"/><path d="M704.0 276.5 l1.6 84.4" stroke="#2a1830" stroke-width="0.41" opacity="0.61"/><path d="M685.7 277.9 l4.0 34.3" stroke="#1e1428" stroke-width="0.76" opacity="0.71"/><path d="M767.0 287.8 l-3.3 39.4" stroke="#4a2838" stroke-width="0.39" opacity="0.38"/><path d="M775.4 304.3 l-3.7 64.9" stroke="#3a2038" stroke-width="0.38" opacity="0.64"/><path d="M706.3 292.6 l-5.6 49.0" stroke="#2a1830" stroke-width="0.49" opacity="0.51"/><path d="M760.7 305.9 l-3.6 52.2" stroke="#2a1830" stroke-width="0.69" opacity="0.30"/><path d="M738.0 285.3 l-2.8 58.4" stroke="#1e1428" stroke-width="0.70" opacity="0.68"/><path d="M716.9 295.9 l-4.0 75.3" stroke="#2a1830" stroke-width="0.85" opacity="0.55"/><path d="M682.7 282.0 l-0.2 81.5" stroke="#3a2038" stroke-width="0.50" opacity="0.63"/><path d="M763.5 284.6 l0.2 76.5" stroke="#3a2038" stroke-width="0.81" opacity="0.57"/><path d="M780.5 301.3 l-5.2 83.7" stroke="#2a1830" stroke-width="0.45" opacity="0.51"/><path d="M750.8 295.7 l3.4 73.2" stroke="#2a1830" stroke-width="0.90" opacity="0.31"/><path d="M733.1 293.6 l-2.9 80.7" stroke="#1e1428" stroke-width="0.50" opacity="0.51"/><path d="M668.3 288.9 l-4.1 72.6" stroke="#2a1830" stroke-width="0.41" opacity="0.72"/><path d="M786.8 289.6 l-4.0 71.4" stroke="#1e1428" stroke-width="0.74" opacity="0.42"/><path d="M660.1 286.2 l0.2 84.1" stroke="#1e1428" stroke-width="0.36" opacity="0.40"/><path d="M770.5 292.1 l-5.3 93.7" stroke="#4a2838" stroke-width="0.57" opacity="0.74"/><path d="M749.4 297.8 l-0.6 65.6" stroke="#2a1830" stroke-width="0.77" opacity="0.73"/><path d="M678.6 298.4 l-1.0 46.9" stroke="#3a2038" stroke-width="0.45" opacity="0.49"/><path d="M788.7 305.3 l1.0 85.3" stroke="#2a1830" stroke-width="0.48" opacity="0.58"/><path d="M691.0 304.4 l-1.2 60.4" stroke="#4a2838" stroke-width="0.82" opacity="0.38"/><path d="M721.1 290.2 l-3.6 78.7" stroke="#3a2038" stroke-width="0.48" opacity="0.62"/><path d="M793.4 288.1 l0.5 91.1" stroke="#3a2038" stroke-width="0.65" opacity="0.66"/><path d="M650.1 296.2 l-4.6 82.8" stroke="#2a1830" stroke-width="0.41" opacity="0.32"/><path d="M776.0 295.0 l-4.8 40.6" stroke="#4a2838" stroke-width="0.36" opacity="0.65"/><path d="M728.8 295.4 l2.7 79.2" stroke="#4a2838" stroke-width="0.74" opacity="0.74"/><path d="M725.9 300.6 l-2.8 101.0" stroke="#2a1830" stroke-width="0.77" opacity="0.56"/><path d="M723.9 277.2 l3.3 41.2" stroke="#3a2038" stroke-width="0.50" opacity="0.43"/><path d="M715.4 277.9 l3.2 67.2" stroke="#3a2038" stroke-width="0.48" opacity="0.49"/><path d="M703.3 276.0 l-4.5 35.2" stroke="#1e1428" stroke-width="0.52" opacity="0.65"/><path d="M764.3 308.7 l-0.4 33.9" stroke="#1e1428" stroke-width="0.49" opacity="0.54"/><path d="M654.6 295.4 l-5.0 98.5" stroke="#3a2038" stroke-width="0.52" opacity="0.37"/><path d="M696.2 303.4 l3.0 28.7" stroke="#1e1428" stroke-width="0.58" opacity="0.30"/><path d="M774.8 297.2 l-5.1 58.3" stroke="#4a2838" stroke-width="0.40" opacity="0.44"/><path d="M669.1 296.9 l-2.4 78.4" stroke="#1e1428" stroke-width="0.88" opacity="0.69"/><path d="M660.6 288.4 l-1.5 69.3" stroke="#4a2838" stroke-width="0.52" opacity="0.73"/><path d="M663.0 291.1 l3.9 31.3" stroke="#4a2838" stroke-width="0.41" opacity="0.56"/><path d="M727.6 295.5 l-0.8 82.1" stroke="#2a1830" stroke-width="0.55" opacity="0.37"/><path d="M651.6 293.9 l3.6 60.1" stroke="#1e1428" stroke-width="0.61" opacity="0.55"/><path d="M785.7 291.6 l-1.1 44.3" stroke="#1e1428" stroke-width="0.49" opacity="0.42"/><path d="M798.1 299.2 l-1.3 82.1" stroke="#3a2038" stroke-width="0.38" opacity="0.38"/><path d="M712.7 300.3 l-3.9 75.4" stroke="#4a2838" stroke-width="0.48" opacity="0.33"/><path d="M675.6 288.9 l3.0 101.1" stroke="#3a2038" stroke-width="0.62" opacity="0.65"/><path d="M715.6 280.7 l-4.9 55.8" stroke="#4a2838" stroke-width="0.61" opacity="0.33"/><path d="M697.1 302.8 l3.3 96.2" stroke="#1e1428" stroke-width="0.75" opacity="0.33"/><path d="M748.2 287.4 l-0.8 51.1" stroke="#3a2038" stroke-width="0.76" opacity="0.47"/><path d="M777.2 293.5 l0.0 59.9" stroke="#3a2038" stroke-width="0.58" opacity="0.68"/><path d="M738.7 297.8 l-5.7 104.3" stroke="#3a2038" stroke-width="0.83" opacity="0.34"/><path d="M786.3 296.6 l2.9 69.7" stroke="#3a2038" stroke-width="0.72" opacity="0.35"/><path d="M704.2 287.5 l-2.2 72.9" stroke="#3a2038" stroke-width="0.52" opacity="0.40"/><path d="M710.7 284.1 l-1.1 91.4" stroke="#2a1830" stroke-width="0.44" opacity="0.70"/><path d="M763.2 289.1 l-1.0 32.4" stroke="#3a2038" stroke-width="0.88" opacity="0.34"/><path d="M740.3 290.6 l0.8 66.5" stroke="#4a2838" stroke-width="0.61" opacity="0.73"/><path d="M797.6 294.4 l3.0 79.7" stroke="#3a2038" stroke-width="0.36" opacity="0.66"/><path d="M664.1 297.9 l1.1 68.7" stroke="#2a1830" stroke-width="0.67" opacity="0.61"/><path d="M776.8 307.4 l3.4 72.6" stroke="#2a1830" stroke-width="0.73" opacity="0.70"/><path d="M754.5 284.3 l-4.2 109.1" stroke="#1e1428" stroke-width="0.67" opacity="0.59"/><path d="M754.2 283.7 l-4.4 58.6" stroke="#4a2838" stroke-width="0.68" opacity="0.52"/><path d="M760.0 288.3 l-2.7 47.5" stroke="#4a2838" stroke-width="0.89" opacity="0.60"/><path d="M740.5 298.5 l1.8 45.1" stroke="#2a1830" stroke-width="0.79" opacity="0.34"/><path d="M739.0 304.4 l2.5 77.8" stroke="#4a2838" stroke-width="0.89" opacity="0.52"/><path d="M653.6 293.4 l0.6 52.3" stroke="#3a2038" stroke-width="0.49" opacity="0.68"/><path d="M737.5 292.7 l-4.7 34.7" stroke="#3a2038" stroke-width="0.75" opacity="0.46"/><path d="M743.1 293.2 l-5.5 44.9" stroke="#2a1830" stroke-width="0.41" opacity="0.50"/><path d="M680.8 295.4 l-3.3 84.2" stroke="#3a2038" stroke-width="0.35" opacity="0.57"/><path d="M737.4 304.5 l1.3 44.4" stroke="#1e1428" stroke-width="0.59" opacity="0.56"/><path d="M664.6 280.0 l-2.3 66.2" stroke="#2a1830" stroke-width="0.71" opacity="0.68"/><path d="M746.9 294.6 l-3.3 59.7" stroke="#2a1830" stroke-width="0.73" opacity="0.47"/><path d="M711.2 304.7 l-1.4 75.1" stroke="#3a2038" stroke-width="0.61" opacity="0.49"/><path d="M697.6 286.2 l0.8 88.9" stroke="#2a1830" stroke-width="0.58" opacity="0.70"/><path d="M791.4 306.7 l-5.8 83.7" stroke="#4a2838" stroke-width="0.72" opacity="0.62"/><path d="M790.2 294.5 l0.4 81.5" stroke="#4a2838" stroke-width="0.89" opacity="0.45"/><path d="M659.3 278.2 l0.7 31.1" stroke="#4a2838" stroke-width="0.63" opacity="0.33"/><path d="M714.4 300.2 l-0.0 57.5" stroke="#2a1830" stroke-width="0.46" opacity="0.75"/><path d="M785.5 309.7 l-3.3 82.8" stroke="#4a2838" stroke-width="0.75" opacity="0.71"/><path d="M681.4 293.7 l-0.1 106.3" stroke="#3a2038" stroke-width="0.43" opacity="0.39"/><path d="M655.3 276.0 l-3.4 56.8" stroke="#2a1830" stroke-width="0.62" opacity="0.33"/><path d="M750.7 286.3 l-0.7 74.4" stroke="#2a1830" stroke-width="0.78" opacity="0.56"/><path d="M733.7 299.9 l-4.9 33.2" stroke="#2a1830" stroke-width="0.83" opacity="0.68"/><path d="M729.6 282.9 l-5.7 64.2" stroke="#2a1830" stroke-width="0.48" opacity="0.46"/><path d="M764.2 300.4 l-3.3 65.0" stroke="#4a2838" stroke-width="0.55" opacity="0.72"/><path d="M737.5 282.8 l3.3 41.4" stroke="#4a2838" stroke-width="0.84" opacity="0.36"/><path d="M743.0 276.5 l3.3 99.6" stroke="#2a1830" stroke-width="0.61" opacity="0.31"/><path d="M730.9 288.4 l-4.6 101.0" stroke="#1e1428" stroke-width="0.85" opacity="0.42"/><path d="M729.6 296.0 l-4.0 47.3" stroke="#1e1428" stroke-width="0.71" opacity="0.54"/><path d="M676.0 288.5 l-3.5 39.2" stroke="#1e1428" stroke-width="0.53" opacity="0.37"/><path d="M799.3 310.1 l3.1 107.7" stroke="#3a2038" stroke-width="0.88" opacity="0.35"/><path d="M686.8 298.4 l2.6 47.7" stroke="#3a2038" stroke-width="0.87" opacity="0.72"/><path d="M748.2 301.8 l-3.7 91.3" stroke="#1e1428" stroke-width="0.45" opacity="0.37"/><path d="M745.3 281.9 l3.5 80.9" stroke="#3a2038" stroke-width="0.37" opacity="0.45"/><path d="M704.3 292.9 l-1.3 25.4" stroke="#2a1830" stroke-width="0.84" opacity="0.73"/><path d="M799.9 309.9 l-1.0 64.1" stroke="#1e1428" stroke-width="0.87" opacity="0.55"/><path d="M774.5 298.9 l-3.9 95.1" stroke="#2a1830" stroke-width="0.58" opacity="0.41"/><path d="M785.8 294.7 l-2.3 61.4" stroke="#1e1428" stroke-width="0.90" opacity="0.39"/><path d="M765.8 287.7 l-5.2 107.6" stroke="#2a1830" stroke-width="0.39" opacity="0.47"/><path d="M667.8 300.2 l2.8 80.3" stroke="#1e1428" stroke-width="0.75" opacity="0.63"/><path d="M744.2 279.4 l3.9 49.2" stroke="#2a1830" stroke-width="0.59" opacity="0.41"/><path d="M667.6 304.2 l2.4 56.3" stroke="#3a2038" stroke-width="0.63" opacity="0.42"/><path d="M717.8 288.2 l0.1 103.6" stroke="#1e1428" stroke-width="0.50" opacity="0.45"/><path d="M672.4 287.4 l0.6 30.5" stroke="#4a2838" stroke-width="0.83" opacity="0.70"/><path d="M665.3 301.6 l-5.7 50.1" stroke="#2a1830" stroke-width="0.71" opacity="0.53"/><path d="M715.3 300.2 l-2.7 79.5" stroke="#2a1830" stroke-width="0.48" opacity="0.58"/><path d="M693.3 289.7 l0.3 59.6" stroke="#3a2038" stroke-width="0.83" opacity="0.47"/><path d="M733.4 295.4 l-3.5 45.7" stroke="#3a2038" stroke-width="0.86" opacity="0.37"/><path d="M687.5 290.2 l-3.6 63.4" stroke="#2a1830" stroke-width="0.45" opacity="0.73"/><path d="M779.7 288.0 l-0.1 92.0" stroke="#3a2038" stroke-width="0.35" opacity="0.43"/><path d="M777.2 310.5 l3.8 78.0" stroke="#2a1830" stroke-width="0.69" opacity="0.65"/><path d="M669.1 285.3 l-5.1 5.5" stroke="#3a2030" stroke-width="1.4" opacity="0.60"/><path d="M698.3 276.8 l1.1 4.7" stroke="#4a2838" stroke-width="1.5" opacity="0.72"/><path d="M713.8 291.0 l-2.0 6.6" stroke="#3a2030" stroke-width="1.3" opacity="0.73"/><path d="M690.1 273.9 l-6.2 5.9" stroke="#3a2030" stroke-width="1.4" opacity="0.59"/><path d="M717.1 279.0 l1.2 5.8" stroke="#1e1020" stroke-width="1.1" opacity="0.62"/><path d="M707.4 286.0 l-1.3 3.6" stroke="#4a2838" stroke-width="0.7" opacity="0.78"/><path d="M689.6 299.6 l-0.7 5.0" stroke="#1e1020" stroke-width="1.3" opacity="0.57"/><path d="M717.6 288.5 l-0.4 6.3" stroke="#1e1020" stroke-width="0.9" opacity="0.76"/><path d="M706.8 277.5 l-1.0 6.0" stroke="#4a2838" stroke-width="1.6" opacity="0.49"/><path d="M726.8 274.2 l-0.3 6.7" stroke="#1e1020" stroke-width="1.2" opacity="0.53"/><path d="M727.4 301.0 l-4.0 5.5" stroke="#2a1828" stroke-width="0.9" opacity="0.42"/><path d="M669.4 292.0 l1.8 4.9" stroke="#4a2838" stroke-width="0.7" opacity="0.54"/><path d="M670.2 301.3 l0.7 3.7" stroke="#2a1828" stroke-width="1.6" opacity="0.78"/><path d="M685.4 281.2 l-4.3 4.5" stroke="#4a2838" stroke-width="1.4" opacity="0.70"/><path d="M767.6 297.9 l-1.9 4.5" stroke="#3a2030" stroke-width="1.4" opacity="0.52"/><path d="M760.2 285.2 l-2.8 6.3" stroke="#3a2030" stroke-width="1.4" opacity="0.74"/><path d="M699.6 276.6 l2.0 3.8" stroke="#3a2030" stroke-width="0.9" opacity="0.82"/><path d="M778.1 281.1 l-0.3 2.1" stroke="#3a2030" stroke-width="0.7" opacity="0.55"/><path d="M755.3 287.7 l-1.4 5.2" stroke="#2a1828" stroke-width="1.1" opacity="0.81"/><path d="M767.5 284.8 l-5.8 6.4" stroke="#1e1020" stroke-width="1.5" opacity="0.63"/><path d="M758.6 297.3 l0.8 2.7" stroke="#4a2838" stroke-width="1.0" opacity="0.75"/><path d="M760.6 291.8 l3.1 6.3" stroke="#2a1828" stroke-width="0.8" opacity="0.78"/><path d="M676.2 280.7 l1.0 2.6" stroke="#2a1828" stroke-width="0.9" opacity="0.49"/><path d="M713.4 277.1 l-1.1 6.6" stroke="#1e1020" stroke-width="1.5" opacity="0.63"/><path d="M750.7 279.7 l3.4 6.6" stroke="#4a2838" stroke-width="1.7" opacity="0.75"/><path d="M738.5 294.5 l-3.8 4.7" stroke="#2a1828" stroke-width="1.2" opacity="0.59"/><path d="M677.0 298.5 l-0.4 2.9" stroke="#2a1828" stroke-width="1.2" opacity="0.61"/><path d="M741.5 290.4 l1.9 4.4" stroke="#3a2030" stroke-width="1.5" opacity="0.73"/><path d="M754.2 279.8 l-3.2 4.5" stroke="#4a2838" stroke-width="0.9" opacity="0.74"/><path d="M678.5 281.9 l-1.1 2.9" stroke="#2a1828" stroke-width="0.9" opacity="0.69"/><path d="M752.9 284.2 l-4.5 5.0" stroke="#4a2838" stroke-width="1.5" opacity="0.75"/><path d="M731.6 289.2 l-1.4 2.0" stroke="#1e1020" stroke-width="1.4" opacity="0.74"/><path d="M670.6 290.0 l-4.5 5.5" stroke="#4a2838" stroke-width="1.3" opacity="0.59"/><path d="M706.9 301.1 l-6.3 6.8" stroke="#1e1020" stroke-width="1.3" opacity="0.55"/><path d="M750.7 281.4 l-1.1 5.7" stroke="#3a2030" stroke-width="0.8" opacity="0.81"/><path d="M788.6 303.6 l0.3 3.5" stroke="#3a2030" stroke-width="0.8" opacity="0.83"/><path d="M792.1 309.1 l-3.4 3.1" stroke="#4a2838" stroke-width="0.9" opacity="0.48"/><path d="M698.1 275.7 l1.2 2.1" stroke="#3a2030" stroke-width="1.1" opacity="0.52"/><path d="M693.3 272.1 l-3.0 5.1" stroke="#3a2030" stroke-width="0.7" opacity="0.57"/><path d="M770.1 298.9 l-3.7 6.6" stroke="#2a1828" stroke-width="1.1" opacity="0.65"/><path d="M767.5 302.5 l-1.2 2.8" stroke="#4a2838" stroke-width="1.3" opacity="0.49"/><path d="M719.7 281.8 l-0.4 4.4" stroke="#2a1828" stroke-width="1.4" opacity="0.63"/><path d="M767.6 291.7 l0.0 3.0" stroke="#2a1828" stroke-width="1.6" opacity="0.76"/><path d="M677.9 291.2 l1.5 3.5" stroke="#1e1020" stroke-width="1.1" opacity="0.61"/><path d="M751.3 288.3 l-0.6 4.0" stroke="#2a1828" stroke-width="1.2" opacity="0.63"/><path d="M730.6 280.9 l2.2 6.4" stroke="#1e1020" stroke-width="1.4" opacity="0.57"/><path d="M656.4 280.4 l3.0 5.2" stroke="#1e1020" stroke-width="1.5" opacity="0.76"/><path d="M790.2 286.9 l-2.6 2.8" stroke="#4a2838" stroke-width="1.0" opacity="0.73"/><path d="M717.8 284.0 l-3.0 5.4" stroke="#3a2030" stroke-width="1.3" opacity="0.41"/><path d="M748.2 288.7 l0.4 5.5" stroke="#1e1020" stroke-width="1.6" opacity="0.55"/><path d="M656.1 286.1 l-0.1 2.1" stroke="#1e1020" stroke-width="0.8" opacity="0.69"/><path d="M753.8 284.9 l1.8 5.7" stroke="#4a2838" stroke-width="0.8" opacity="0.64"/><path d="M673.9 299.6 l-0.0 4.6" stroke="#3a2030" stroke-width="1.5" opacity="0.63"/><path d="M734.9 285.9 l0.8 3.2" stroke="#3a2030" stroke-width="0.7" opacity="0.41"/><path d="M718.1 274.4 l-2.5 4.2" stroke="#4a2838" stroke-width="1.4" opacity="0.49"/><path d="M686.8 277.3 l1.9 3.2" stroke="#1e1020" stroke-width="1.7" opacity="0.61"/><path d="M759.8 281.4 l0.6 6.7" stroke="#3a2030" stroke-width="1.5" opacity="0.59"/><path d="M723.4 297.0 l-2.7 5.6" stroke="#4a2838" stroke-width="1.2" opacity="0.67"/><path d="M712.3 287.5 l0.5 3.6" stroke="#1e1020" stroke-width="1.5" opacity="0.43"/><path d="M666.0 288.3 l-4.9 5.0" stroke="#3a2030" stroke-width="1.3" opacity="0.68"/><path d="M661.9 295.2 l3.7 6.4" stroke="#2a1828" stroke-width="0.8" opacity="0.65"/><path d="M793.8 307.7 l0.7 6.7" stroke="#2a1828" stroke-width="1.2" opacity="0.84"/><path d="M665.7 276.0 l-4.4 6.5" stroke="#1e1020" stroke-width="1.0" opacity="0.80"/><path d="M785.5 297.2 l-1.3 2.5" stroke="#2a1828" stroke-width="1.3" opacity="0.53"/><path d="M707.6 273.8 l1.1 4.0" stroke="#1e1020" stroke-width="0.8" opacity="0.71"/><path d="M791.8 282.6 l2.6 6.3" stroke="#3a2030" stroke-width="1.0" opacity="0.43"/><path d="M743.1 294.1 l-1.3 2.3" stroke="#1e1020" stroke-width="0.8" opacity="0.49"/><path d="M702.9 278.8 l-0.4 2.5" stroke="#1e1020" stroke-width="0.9" opacity="0.75"/><path d="M787.0 281.5 l-3.8 3.8" stroke="#3a2030" stroke-width="1.6" opacity="0.46"/><path d="M661.9 301.4 l-1.9 2.8" stroke="#4a2838" stroke-width="1.5" opacity="0.42"/><path d="M760.9 282.8 l0.7 6.4" stroke="#4a2838" stroke-width="1.3" opacity="0.67"/><path d="M788.0 281.8 l1.5 2.8" stroke="#3a2030" stroke-width="1.3" opacity="0.48"/><path d="M783.9 302.4 l-5.3 6.4" stroke="#4a2838" stroke-width="0.9" opacity="0.83"/><path d="M687.8 295.9 l-1.4 3.9" stroke="#2a1828" stroke-width="1.6" opacity="0.73"/><path d="M674.3 273.2 l0.5 6.5" stroke="#2a1828" stroke-width="1.2" opacity="0.42"/><path d="M676.3 290.0 l-2.4 4.8" stroke="#3a2030" stroke-width="1.0" opacity="0.50"/><path d="M707.9 297.2 l2.4 5.7" stroke="#2a1828" stroke-width="1.3" opacity="0.45"/><path d="M787.7 292.8 l0.9 6.2" stroke="#3a2030" stroke-width="1.5" opacity="0.53"/><path d="M731.5 276.9 l-1.9 6.7" stroke="#4a2838" stroke-width="0.9" opacity="0.78"/><path d="M690.4 301.8 l2.2 4.3" stroke="#2a1828" stroke-width="1.6" opacity="0.54"/><path d="M690.3 289.1 l0.2 3.0" stroke="#1e1020" stroke-width="0.9" opacity="0.57"/><path d="M771.6 301.2 l-3.7 3.3" stroke="#3a2030" stroke-width="1.5" opacity="0.66"/><path d="M766.2 286.1 l1.6 3.8" stroke="#2a1828" stroke-width="1.0" opacity="0.47"/><path d="M758.9 283.5 l1.6 6.4" stroke="#3a2030" stroke-width="1.1" opacity="0.80"/><path d="M655.5 299.2 l1.4 5.4" stroke="#1e1020" stroke-width="1.1" opacity="0.46"/><path d="M721.5 276.5 l-5.1 6.7" stroke="#4a2838" stroke-width="1.6" opacity="0.75"/><path d="M718.7 297.2 l-2.3 2.2" stroke="#1e1020" stroke-width="1.4" opacity="0.41"/><path d="M749.9 279.9 l-3.4 3.6" stroke="#3a2030" stroke-width="1.3" opacity="0.72"/><path d="M691.9 272.6 l-0.6 2.2" stroke="#2a1828" stroke-width="0.7" opacity="0.45"/><path d="M788.3 294.4 l-3.6 3.2" stroke="#2a1828" stroke-width="1.0" opacity="0.48"/><path d="M713.4 293.3 l-0.7 3.7" stroke="#4a2838" stroke-width="0.9" opacity="0.71"/><path d="M786.3 299.9 l-4.9 5.5" stroke="#2a1828" stroke-width="1.1" opacity="0.74"/><path d="M733.9 293.3 l-2.0 4.2" stroke="#4a2838" stroke-width="1.2" opacity="0.50"/><path d="M717.5 295.1 l-5.2 4.4" stroke="#3a2030" stroke-width="1.3" opacity="0.42"/><path d="M750.1 290.8 l1.3 6.4" stroke="#2a1828" stroke-width="1.7" opacity="0.61"/><path d="M742.0 296.8 l-2.5 2.4" stroke="#2a1828" stroke-width="1.6" opacity="0.53"/><path d="M662.5 298.0 l-2.4 6.1" stroke="#4a2838" stroke-width="0.9" opacity="0.73"/><path d="M783.9 303.4 l-2.3 4.6" stroke="#2a1828" stroke-width="1.5" opacity="0.63"/><path d="M779.5 305.1 l-4.4 4.5" stroke="#4a2838" stroke-width="1.3" opacity="0.40"/><path d="M762.3 298.0 l3.5 7.0" stroke="#2a1828" stroke-width="1.6" opacity="0.66"/><path d="M731.9 281.9 l-1.2 3.6" stroke="#4a2838" stroke-width="1.5" opacity="0.54"/><path d="M739.5 300.2 l-2.1 2.1" stroke="#3a2030" stroke-width="1.3" opacity="0.59"/><path d="M765.0 289.3 l-1.5 2.7" stroke="#4a2838" stroke-width="1.2" opacity="0.41"/><path d="M794.5 284.3 l0.8 3.4" stroke="#2a1828" stroke-width="1.4" opacity="0.57"/><path d="M758.2 294.7 l1.0 4.9" stroke="#2a1828" stroke-width="1.4" opacity="0.64"/><path d="M769.6 303.7 l-2.1 4.3" stroke="#4a2838" stroke-width="0.7" opacity="0.48"/><path d="M735.5 275.1 l-2.5 2.1" stroke="#2a1828" stroke-width="0.8" opacity="0.50"/><path d="M678.3 275.2 l1.1 2.1" stroke="#3a2030" stroke-width="0.7" opacity="0.77"/><path d="M734.0 278.2 l-6.4 6.4" stroke="#1e1020" stroke-width="1.4" opacity="0.51"/><path d="M671.7 290.9 l-0.4 3.5" stroke="#1e1020" stroke-width="0.7" opacity="0.73"/><path d="M791.9 293.5 l-3.0 4.9" stroke="#4a2838" stroke-width="1.4" opacity="0.81"/><path d="M777.5 281.9 l-4.4 3.7" stroke="#1e1020" stroke-width="1.4" opacity="0.69"/><path d="M681.8 282.5 l-5.8 5.6" stroke="#3a2030" stroke-width="0.7" opacity="0.76"/><path d="M791.1 299.1 l-2.4 6.9" stroke="#1e1020" stroke-width="1.6" opacity="0.61"/><path d="M723.7 273.0 l-7.0 6.8" stroke="#2a1828" stroke-width="0.9" opacity="0.56"/><path d="M693.5 272.3 l-2.1 4.0" stroke="#2a1828" stroke-width="0.7" opacity="0.52"/><path d="M726.4 296.7 l0.8 2.9" stroke="#2a1828" stroke-width="1.0" opacity="0.81"/><path d="M710.1 293.2 l1.0 2.3" stroke="#4a2838" stroke-width="1.7" opacity="0.55"/><path d="M770.8 306.7 l-2.7 2.5" stroke="#2a1828" stroke-width="0.7" opacity="0.78"/><path d="M745.7 286.4 l-0.8 2.7" stroke="#1e1020" stroke-width="1.4" opacity="0.76"/><path d="M698.5 287.5 l0.5 6.0" stroke="#2a1828" stroke-width="1.6" opacity="0.84"/><path d="M779.0 280.4 l-3.8 4.1" stroke="#2a1828" stroke-width="0.8" opacity="0.77"/><path d="M739.3 291.3 l2.4 6.7" stroke="#3a2030" stroke-width="1.6" opacity="0.45"/><path d="M661.8 276.6 l-3.2 4.2" stroke="#3a2030" stroke-width="1.4" opacity="0.76"/><path d="M770.6 284.2 l-1.8 5.0" stroke="#3a2030" stroke-width="0.8" opacity="0.49"/><path d="M685.6 295.5 l-3.0 5.9" stroke="#4a2838" stroke-width="1.1" opacity="0.64"/><path d="M688.7 282.3 l2.7 6.8" stroke="#3a2030" stroke-width="1.0" opacity="0.80"/><path d="M732.6 285.4 l-3.3 3.0" stroke="#1e1020" stroke-width="0.9" opacity="0.79"/><path d="M687.7 274.3 l-1.0 3.5" stroke="#4a2838" stroke-width="0.9" opacity="0.76"/><path d="M689.0 284.9 l-1.2 2.6" stroke="#2a1828" stroke-width="0.8" opacity="0.77"/><path d="M650.9 292.5 l-3.4 5.1" stroke="#3a2030" stroke-width="1.1" opacity="0.79"/><path d="M743.4 273.0 l-3.5 4.2" stroke="#4a2838" stroke-width="1.0" opacity="0.42"/><path d="M677.1 275.3 l-3.2 2.8" stroke="#2a1828" stroke-width="1.4" opacity="0.67"/><path d="M659.2 278.5 l-4.7 6.8" stroke="#1e1020" stroke-width="1.7" opacity="0.75"/><path d="M775.3 281.0 l-0.2 6.9" stroke="#1e1020" stroke-width="1.5" opacity="0.67"/><path d="M653.6 284.4 l1.1 3.4" stroke="#4a2838" stroke-width="1.2" opacity="0.80"/><path d="M650.3 285.1 l0.4 3.2" stroke="#1e1020" stroke-width="1.7" opacity="0.52"/><path d="M771.2 294.8 l-2.9 3.8" stroke="#3a2030" stroke-width="1.1" opacity="0.41"/><path d="M737.1 297.4 l-2.1 3.4" stroke="#1e1020" stroke-width="0.9" opacity="0.52"/><path d="M791.4 294.0 l-1.2 5.1" stroke="#3a2030" stroke-width="1.5" opacity="0.82"/><path d="M776.4 300.4 l-3.8 6.4" stroke="#2a1828" stroke-width="1.1" opacity="0.74"/><path d="M777.3 282.1 l1.4 5.1" stroke="#4a2838" stroke-width="0.9" opacity="0.46"/><path d="M777.0 284.6 l1.4 4.6" stroke="#1e1020" stroke-width="0.8" opacity="0.60"/><path d="M771.4 307.3 l2.0 6.9" stroke="#1e1020" stroke-width="1.2" opacity="0.66"/><path d="M728.6 278.7 l-0.9 5.0" stroke="#4a2838" stroke-width="1.4" opacity="0.84"/><path d="M686.7 298.2 l-1.0 5.8" stroke="#4a2838" stroke-width="1.1" opacity="0.46"/><path d="M727.1 281.4 l2.6 5.9" stroke="#3a2030" stroke-width="1.1" opacity="0.69"/><path d="M681.1 300.3 l1.2 2.8" stroke="#3a2030" stroke-width="0.8" opacity="0.84"/><path d="M678.8 292.4 l-3.2 3.3" stroke="#4a2838" stroke-width="1.6" opacity="0.80"/><path d="M747.6 291.8 l1.7 2.8" stroke="#2a1828" stroke-width="1.4" opacity="0.80"/><path d="M783.6 308.1 l-7.8 6.7" stroke="#1e1020" stroke-width="0.7" opacity="0.81"/><path d="M666.2 285.0 l-5.2 5.9" stroke="#2a1828" stroke-width="1.4" opacity="0.59"/><path d="M666.8 290.8 l-1.6 5.0" stroke="#2a1828" stroke-width="1.4" opacity="0.74"/><path d="M679.8 279.7 l1.4 5.2" stroke="#4a2838" stroke-width="0.8" opacity="0.81"/><path d="M735.2 286.7 l-3.3 4.8" stroke="#3a2030" stroke-width="1.4" opacity="0.59"/><path d="M653.2 272.0 l0.2 2.2" stroke="#3a2030" stroke-width="1.0" opacity="0.47"/><path d="M747.5 286.0 l-2.6 5.7" stroke="#4a2838" stroke-width="1.5" opacity="0.64"/><path d="M788.0 301.7 l-3.0 3.2" stroke="#4a2838" stroke-width="0.9" opacity="0.80"/><path d="M747.8 287.5 l0.4 4.7" stroke="#3a2030" stroke-width="1.2" opacity="0.80"/><path d="M779.2 303.5 l0.9 3.3" stroke="#2a1828" stroke-width="1.7" opacity="0.77"/><path d="M718.0 274.2 l-0.3 6.8" stroke="#2a1828" stroke-width="0.9" opacity="0.75"/><path d="M677.3 272.3 l1.6 4.2" stroke="#2a1828" stroke-width="0.7" opacity="0.78"/><path d="M771.1 302.6 l-0.8 6.6" stroke="#3a2030" stroke-width="1.4" opacity="0.64"/><path d="M782.0 301.5 l-0.4 4.5" stroke="#4a2838" stroke-width="1.4" opacity="0.65"/><path d="M697.1 277.2 l-0.5 3.0" stroke="#3a2030" stroke-width="1.6" opacity="0.61"/><path d="M667.4 277.2 l-6.0 5.6" stroke="#3a2030" stroke-width="0.9" opacity="0.75"/><path d="M689.6 300.4 l-0.8 6.8" stroke="#3a2030" stroke-width="0.9" opacity="0.57"/><path d="M678.8 274.4 l0.4 2.6" stroke="#3a2030" stroke-width="1.6" opacity="0.43"/><path d="M735.5 291.9 l-2.7 2.6" stroke="#2a1828" stroke-width="1.1" opacity="0.81"/><path d="M729.3 297.5 l-4.8 4.4" stroke="#2a1828" stroke-width="1.6" opacity="0.60"/><path d="M718.2 287.5 l-0.1 2.5" stroke="#3a2030" stroke-width="1.2" opacity="0.66"/><path d="M781.7 298.0 l2.1 5.4" stroke="#1e1020" stroke-width="1.3" opacity="0.69"/><path d="M749.9 275.7 l-7.7 6.7" stroke="#1e1020" stroke-width="1.5" opacity="0.56"/><path d="M691.5 277.3 l-2.6 2.6" stroke="#4a2838" stroke-width="1.5" opacity="0.51"/><path d="M660.5 283.2 l-0.4 4.2" stroke="#1e1020" stroke-width="1.6" opacity="0.45"/><path d="M724.5 297.3 l-1.9 2.6" stroke="#3a2030" stroke-width="1.0" opacity="0.48"/><path d="M652.2 279.0 l1.2 2.6" stroke="#2a1828" stroke-width="1.1" opacity="0.77"/><path d="M716.3 273.3 l-6.2 5.5" stroke="#4a2838" stroke-width="0.9" opacity="0.59"/><path d="M710.8 293.0 l-2.9 5.2" stroke="#4a2838" stroke-width="1.6" opacity="0.58"/><path d="M743.0 277.8 l-4.5 5.7" stroke="#3a2030" stroke-width="0.7" opacity="0.74"/><path d="M738.9 285.4 l-3.0 3.0" stroke="#3a2030" stroke-width="0.9" opacity="0.45"/><path d="M706.6 272.8 l-1.2 4.8" stroke="#4a2838" stroke-width="1.4" opacity="0.80"/><path d="M662.4 290.2 l-1.2 3.9" stroke="#3a2030" stroke-width="1.5" opacity="0.54"/><path d="M705.4 275.0 l-0.2 4.6" stroke="#3a2030" stroke-width="1.0" opacity="0.53"/><path d="M750.7 277.0 l-1.4 3.2" stroke="#2a1828" stroke-width="1.3" opacity="0.41"/><path d="M754.5 299.0 l-0.4 3.7" stroke="#3a2030" stroke-width="1.6" opacity="0.66"/><path d="M764.8 301.0 l-4.1 6.5" stroke="#1e1020" stroke-width="1.6" opacity="0.42"/><path d="M781.4 293.6 l-2.9 4.9" stroke="#1e1020" stroke-width="1.2" opacity="0.84"/><path d="M653.5 290.8 l-3.8 3.9" stroke="#2a1828" stroke-width="1.4" opacity="0.76"/><path d="M659.1 291.8 l1.2 2.7" stroke="#3a2030" stroke-width="1.3" opacity="0.68"/><path d="M655.5 297.1 l-0.7 5.8" stroke="#4a2838" stroke-width="1.2" opacity="0.40"/><path d="M778.6 291.7 l-0.5 6.7" stroke="#1e1020" stroke-width="1.6" opacity="0.60"/><path d="M695.4 301.0 l-6.8 7.0" stroke="#4a2838" stroke-width="1.5" opacity="0.49"/><path d="M683.9 273.7 l-6.5 6.2" stroke="#3a2030" stroke-width="0.8" opacity="0.76"/><path d="M662.0 275.3 l-5.9 6.2" stroke="#1e1020" stroke-width="1.7" opacity="0.62"/><path d="M711.3 298.9 l3.0 5.2" stroke="#1e1020" stroke-width="1.2" opacity="0.48"/><path d="M757.1 301.4 l-6.5 6.7" stroke="#1e1020" stroke-width="1.2" opacity="0.74"/><path d="M757.4 285.2 l0.5 2.5" stroke="#2a1828" stroke-width="1.6" opacity="0.74"/><path d="M686.2 295.2 l-5.6 5.7" stroke="#3a2030" stroke-width="0.8" opacity="0.66"/><path d="M771.1 292.6 l-0.8 2.4" stroke="#3a2030" stroke-width="0.8" opacity="0.43"/><path d="M773.3 296.4 l-2.8 3.3" stroke="#3a2030" stroke-width="1.3" opacity="0.43"/><path d="M787.7 284.3 l2.2 6.1" stroke="#2a1828" stroke-width="1.3" opacity="0.57"/><path d="M726.2 285.8 l-3.4 4.7" stroke="#3a2030" stroke-width="0.9" opacity="0.59"/><path d="M717.0 285.5 l-0.3 3.7" stroke="#2a1828" stroke-width="0.9" opacity="0.60"/><path d="M792.1 281.4 l-2.9 5.5" stroke="#2a1828" stroke-width="1.5" opacity="0.64"/><path d="M790.4 288.6 l-4.2 5.1" stroke="#2a1828" stroke-width="1.4" opacity="0.70"/><path d="M761.2 294.8 l0.4 5.4" stroke="#2a1828" stroke-width="1.4" opacity="0.82"/><path d="M650.7 281.2 l-3.6 4.1" stroke="#2a1828" stroke-width="1.6" opacity="0.50"/><path d="M701.9 289.7 l-4.6 4.5" stroke="#2a1828" stroke-width="1.3" opacity="0.69"/><path d="M665.1 295.2 l-0.6 2.4" stroke="#4a2838" stroke-width="1.1" opacity="0.61"/><path d="M660.6 276.8 l2.2 4.6" stroke="#2a1828" stroke-width="1.1" opacity="0.63"/><path d="M682.0 297.0 l-1.7 2.7" stroke="#4a2838" stroke-width="0.9" opacity="0.76"/><path d="M721.2 285.9 l1.5 4.8" stroke="#4a2838" stroke-width="1.5" opacity="0.54"/><path d="M781.7 287.0 l2.1 6.4" stroke="#2a1828" stroke-width="1.3" opacity="0.71"/><path d="M759.0 294.9 l-1.8 5.1" stroke="#1e1020" stroke-width="0.8" opacity="0.71"/><path d="M688.7 289.3 l-5.0 5.6" stroke="#2a1828" stroke-width="1.0" opacity="0.46"/><path d="M657.7 287.6 l1.0 2.8" stroke="#1e1020" stroke-width="1.6" opacity="0.62"/><path d="M697.6 276.8 l-2.5 4.2" stroke="#3a2030" stroke-width="1.5" opacity="0.40"/><path d="M662.8 276.7 l-4.9 6.8" stroke="#4a2838" stroke-width="0.9" opacity="0.78"/><path d="M755.9 296.0 l-5.1 6.0" stroke="#4a2838" stroke-width="1.0" opacity="0.75"/><path d="M774.5 293.3 l-3.1 4.6" stroke="#2a1828" stroke-width="1.4" opacity="0.56"/><path d="M750.5 279.4 l1.4 5.8" stroke="#4a2838" stroke-width="1.5" opacity="0.71"/><path d="M761.5 302.4 l2.5 5.8" stroke="#3a2030" stroke-width="1.5" opacity="0.64"/><path d="M663.5 287.6 l-2.2 6.1" stroke="#1e1020" stroke-width="1.4" opacity="0.50"/><path d="M699.8 292.4 l-0.8 5.1" stroke="#2a1828" stroke-width="0.9" opacity="0.49"/><path d="M730.9 290.9 l-0.6 6.3" stroke="#1e1020" stroke-width="1.4" opacity="0.80"/><path d="M752.3 289.1 l-0.8 2.1" stroke="#4a2838" stroke-width="1.2" opacity="0.76"/><path d="M704.3 298.6 l2.3 4.5" stroke="#2a1828" stroke-width="1.0" opacity="0.43"/><path d="M785.8 301.6 l-1.5 6.9" stroke="#1e1020" stroke-width="0.9" opacity="0.82"/><path d="M660.6 277.7 l-7.5 6.9" stroke="#4a2838" stroke-width="1.7" opacity="0.43"/><path d="M710.8 295.8 l-1.6 6.8" stroke="#1e1020" stroke-width="1.2" opacity="0.49"/><path d="M732.8 277.7 l-0.9 4.8" stroke="#2a1828" stroke-width="0.7" opacity="0.60"/><path d="M683.5 287.2 l-0.9 2.0" stroke="#4a2838" stroke-width="0.7" opacity="0.48"/><path d="M762.1 278.0 l-0.8 6.0" stroke="#3a2030" stroke-width="1.3" opacity="0.73"/><path d="M684.7 275.8 l-4.0 5.5" stroke="#1e1020" stroke-width="1.3" opacity="0.44"/><path d="M699.8 300.0 l-0.2 6.2" stroke="#4a2838" stroke-width="1.6" opacity="0.62"/><path d="M779.6 287.5 l3.8 6.7" stroke="#3a2030" stroke-width="1.7" opacity="0.71"/><path d="M748.6 276.1 l-5.9 5.6" stroke="#3a2030" stroke-width="1.5" opacity="0.79"/><path d="M757.3 282.8 l-1.6 5.0" stroke="#1e1020" stroke-width="1.0" opacity="0.60"/><path d="M784.5 292.9 l-0.1 2.1" stroke="#3a2030" stroke-width="1.1" opacity="0.49"/><path d="M692.9 274.7 l1.5 6.0" stroke="#4a2838" stroke-width="1.2" opacity="0.46"/><path d="M745.0 280.3 l-2.2 3.2" stroke="#4a2838" stroke-width="0.9" opacity="0.45"/><path d="M710.9 294.0 l-0.5 4.3" stroke="#4a2838" stroke-width="1.3" opacity="0.67"/><path d="M669.3 301.2 l-3.4 6.4" stroke="#1e1020" stroke-width="1.3" opacity="0.48"/><path d="M691.4 281.3 l0.1 3.6" stroke="#1e1020" stroke-width="1.4" opacity="0.65"/><path d="M692.2 288.4 l3.2 6.4" stroke="#3a2030" stroke-width="1.2" opacity="0.40"/><path d="M662.3 300.0 l1.0 6.9" stroke="#2a1828" stroke-width="1.0" opacity="0.67"/><path d="M673.3 276.0 l-2.5 5.6" stroke="#3a2030" stroke-width="1.3" opacity="0.74"/><path d="M768.4 277.1 l0.7 2.5" stroke="#1e1020" stroke-width="0.9" opacity="0.78"/><path d="M756.7 276.7 l0.3 4.2" stroke="#1e1020" stroke-width="0.8" opacity="0.52"/><path d="M774.9 296.4 l1.7 4.0" stroke="#4a2838" stroke-width="1.6" opacity="0.52"/><path d="M739.0 283.4 l-0.0 2.0" stroke="#2a1828" stroke-width="1.6" opacity="0.77"/><path d="M651.8 293.2 l1.3 4.6" stroke="#2a1828" stroke-width="1.0" opacity="0.41"/><path d="M672.5 297.2 l0.4 2.5" stroke="#2a1828" stroke-width="1.5" opacity="0.62"/><path d="M679.6 297.2 l-3.5 3.0" stroke="#1e1020" stroke-width="1.5" opacity="0.63"/><path d="M709.4 273.3 l-3.8 3.8" stroke="#1e1020" stroke-width="1.1" opacity="0.58"/><path d="M774.0 301.7 l-0.7 3.3" stroke="#3a2030" stroke-width="0.8" opacity="0.73"/><path d="M668.5 274.7 l-1.3 2.6" stroke="#4a2838" stroke-width="0.9" opacity="0.74"/><path d="M706.7 288.7 l-2.7 5.6" stroke="#3a2030" stroke-width="1.4" opacity="0.45"/><path d="M658.8 301.5 l-2.4 3.6" stroke="#3a2030" stroke-width="0.8" opacity="0.82"/><line x1="748.5" y1="362.5" x2="747.0" y2="384.1" stroke="#d07a70" stroke-width="0.7" opacity="0.51"/><line x1="779.5" y1="370.9" x2="778.9" y2="384.1" stroke="#c86a68" stroke-width="0.9" opacity="0.59"/><line x1="694.5" y1="329.1" x2="692.8" y2="345.9" stroke="#b05a70" stroke-width="0.9" opacity="0.58"/><line x1="764.9" y1="373.6" x2="762.6" y2="380.4" stroke="#b05a70" stroke-width="0.7" opacity="0.41"/><line x1="722.5" y1="365.6" x2="721.7" y2="378.0" stroke="#c86a68" stroke-width="0.6" opacity="0.55"/><line x1="745.0" y1="323.4" x2="742.3" y2="344.5" stroke="#b05a70" stroke-width="0.9" opacity="0.46"/><line x1="745.7" y1="364.5" x2="742.9" y2="380.6" stroke="#c86a68" stroke-width="0.9" opacity="0.31"/><line x1="692.0" y1="336.2" x2="691.1" y2="355.0" stroke="#d07a70" stroke-width="0.6" opacity="0.60"/><line x1="771.2" y1="336.8" x2="770.2" y2="356.0" stroke="#b05a70" stroke-width="0.6" opacity="0.36"/><line x1="691.8" y1="334.7" x2="689.9" y2="355.2" stroke="#c86a68" stroke-width="1.0" opacity="0.32"/><line x1="749.1" y1="383.0" x2="746.4" y2="393.2" stroke="#c86a68" stroke-width="0.6" opacity="0.53"/><line x1="708.0" y1="374.6" x2="705.4" y2="394.5" stroke="#b05a70" stroke-width="0.7" opacity="0.31"/><line x1="758.4" y1="340.9" x2="757.3" y2="349.4" stroke="#c86a68" stroke-width="0.9" opacity="0.50"/><line x1="723.5" y1="361.2" x2="722.5" y2="369.4" stroke="#c86a68" stroke-width="0.6" opacity="0.34"/><line x1="760.3" y1="351.6" x2="758.3" y2="361.3" stroke="#c86a68" stroke-width="0.6" opacity="0.34"/><line x1="732.8" y1="319.4" x2="731.6" y2="326.4" stroke="#c86a68" stroke-width="1.0" opacity="0.51"/><line x1="730.2" y1="320.3" x2="727.3" y2="327.6" stroke="#d07a70" stroke-width="0.6" opacity="0.51"/><line x1="786.8" y1="368.0" x2="784.5" y2="374.7" stroke="#c86a68" stroke-width="0.8" opacity="0.31"/><line x1="698.7" y1="318.5" x2="697.1" y2="333.4" stroke="#b05a70" stroke-width="0.8" opacity="0.30"/><line x1="789.4" y1="382.2" x2="787.0" y2="393.4" stroke="#c86a68" stroke-width="0.7" opacity="0.46"/><line x1="696.7" y1="367.6" x2="694.7" y2="380.6" stroke="#b05a70" stroke-width="0.7" opacity="0.35"/><line x1="692.2" y1="380.2" x2="690.8" y2="395.8" stroke="#c86a68" stroke-width="0.6" opacity="0.40"/><line x1="706.7" y1="320.7" x2="705.4" y2="335.1" stroke="#d07a70" stroke-width="1.0" opacity="0.44"/><line x1="769.7" y1="366.4" x2="767.3" y2="376.9" stroke="#d07a70" stroke-width="0.9" opacity="0.59"/><line x1="748.0" y1="366.3" x2="746.9" y2="387.1" stroke="#c86a68" stroke-width="0.6" opacity="0.40"/><line x1="795.9" y1="375.4" x2="795.0" y2="382.6" stroke="#c86a68" stroke-width="0.9" opacity="0.38"/><line x1="699.4" y1="362.8" x2="697.7" y2="371.0" stroke="#b05a70" stroke-width="0.8" opacity="0.52"/><line x1="768.8" y1="332.5" x2="768.6" y2="352.4" stroke="#b05a70" stroke-width="0.6" opacity="0.36"/><line x1="788.9" y1="370.2" x2="788.0" y2="392.1" stroke="#c86a68" stroke-width="0.7" opacity="0.56"/><line x1="797.8" y1="364.8" x2="797.5" y2="373.2" stroke="#d07a70" stroke-width="0.6" opacity="0.34"/><line x1="712.8" y1="335.7" x2="710.1" y2="347.3" stroke="#c86a68" stroke-width="0.6" opacity="0.56"/><line x1="713.6" y1="334.9" x2="712.4" y2="351.4" stroke="#c86a68" stroke-width="0.8" opacity="0.59"/><line x1="732.3" y1="363.6" x2="729.6" y2="376.6" stroke="#b05a70" stroke-width="0.7" opacity="0.36"/><line x1="786.3" y1="379.5" x2="785.4" y2="393.1" stroke="#b05a70" stroke-width="0.8" opacity="0.45"/><line x1="771.6" y1="362.8" x2="771.2" y2="376.7" stroke="#b05a70" stroke-width="0.6" opacity="0.38"/><line x1="727.9" y1="368.2" x2="725.3" y2="380.0" stroke="#b05a70" stroke-width="0.8" opacity="0.30"/><line x1="749.3" y1="384.1" x2="748.7" y2="392.0" stroke="#c86a68" stroke-width="0.6" opacity="0.41"/><line x1="782.2" y1="378.5" x2="779.9" y2="391.8" stroke="#d07a70" stroke-width="0.7" opacity="0.30"/><line x1="744.1" y1="370.0" x2="742.4" y2="378.0" stroke="#d07a70" stroke-width="0.7" opacity="0.59"/><line x1="709.9" y1="371.9" x2="709.7" y2="382.4" stroke="#d07a70" stroke-width="1.0" opacity="0.45"/><line x1="779.5" y1="359.3" x2="778.5" y2="367.0" stroke="#d07a70" stroke-width="0.8" opacity="0.46"/><line x1="753.3" y1="329.6" x2="750.3" y2="339.8" stroke="#d07a70" stroke-width="0.6" opacity="0.33"/><line x1="785.1" y1="384.9" x2="783.3" y2="397.3" stroke="#b05a70" stroke-width="1.0" opacity="0.31"/><line x1="692.4" y1="374.2" x2="691.4" y2="387.7" stroke="#c86a68" stroke-width="0.7" opacity="0.47"/><line x1="704.7" y1="331.6" x2="702.9" y2="349.4" stroke="#b05a70" stroke-width="0.8" opacity="0.38"/><line x1="727.9" y1="359.7" x2="725.2" y2="369.4" stroke="#d07a70" stroke-width="0.8" opacity="0.35"/><line x1="720.7" y1="357.4" x2="720.5" y2="370.6" stroke="#d07a70" stroke-width="0.7" opacity="0.42"/><line x1="790.6" y1="383.7" x2="789.8" y2="404.1" stroke="#b05a70" stroke-width="0.8" opacity="0.52"/><line x1="716.7" y1="357.8" x2="715.1" y2="375.4" stroke="#b05a70" stroke-width="0.6" opacity="0.50"/><line x1="697.6" y1="332.8" x2="696.9" y2="349.0" stroke="#d07a70" stroke-width="0.5" opacity="0.60"/><line x1="728.5" y1="377.3" x2="728.0" y2="397.7" stroke="#c86a68" stroke-width="0.9" opacity="0.36"/><line x1="777.4" y1="364.9" x2="776.9" y2="384.8" stroke="#b05a70" stroke-width="0.8" opacity="0.49"/><line x1="768.1" y1="363.9" x2="767.0" y2="382.0" stroke="#c86a68" stroke-width="0.7" opacity="0.46"/><line x1="695.3" y1="322.1" x2="693.2" y2="330.3" stroke="#d07a70" stroke-width="0.7" opacity="0.57"/><line x1="762.4" y1="350.3" x2="762.0" y2="369.5" stroke="#d07a70" stroke-width="0.8" opacity="0.57"/><line x1="771.4" y1="361.9" x2="769.5" y2="379.1" stroke="#d07a70" stroke-width="0.7" opacity="0.44"/><line x1="728.6" y1="342.6" x2="727.9" y2="357.9" stroke="#c86a68" stroke-width="0.8" opacity="0.49"/><line x1="718.5" y1="367.4" x2="716.1" y2="387.8" stroke="#d07a70" stroke-width="0.6" opacity="0.46"/><line x1="794.3" y1="342.5" x2="793.2" y2="355.3" stroke="#b05a70" stroke-width="0.8" opacity="0.31"/><line x1="694.9" y1="334.6" x2="693.5" y2="352.5" stroke="#c86a68" stroke-width="0.8" opacity="0.36"/><line x1="720.3" y1="334.5" x2="719.1" y2="347.4" stroke="#d07a70" stroke-width="0.5" opacity="0.45"/><line x1="786.3" y1="330.0" x2="784.5" y2="345.3" stroke="#c86a68" stroke-width="0.8" opacity="0.31"/><line x1="755.4" y1="371.4" x2="753.4" y2="386.5" stroke="#b05a70" stroke-width="0.6" opacity="0.38"/><line x1="695.4" y1="365.0" x2="693.9" y2="384.4" stroke="#d07a70" stroke-width="0.6" opacity="0.59"/><line x1="694.2" y1="355.8" x2="694.0" y2="366.8" stroke="#b05a70" stroke-width="1.0" opacity="0.59"/><line x1="702.9" y1="351.4" x2="702.3" y2="365.5" stroke="#d07a70" stroke-width="0.7" opacity="0.53"/><line x1="788.6" y1="384.7" x2="788.0" y2="400.0" stroke="#c86a68" stroke-width="0.8" opacity="0.56"/><line x1="772.4" y1="360.7" x2="769.5" y2="374.5" stroke="#c86a68" stroke-width="0.7" opacity="0.44"/><line x1="790.5" y1="360.8" x2="787.8" y2="369.0" stroke="#c86a68" stroke-width="1.0" opacity="0.52"/><line x1="727.1" y1="372.8" x2="725.9" y2="392.2" stroke="#b05a70" stroke-width="0.6" opacity="0.42"/><line x1="696.0" y1="342.1" x2="694.5" y2="357.7" stroke="#d07a70" stroke-width="1.0" opacity="0.55"/><line x1="773.9" y1="370.0" x2="772.4" y2="382.7" stroke="#b05a70" stroke-width="0.6" opacity="0.50"/><line x1="766.3" y1="321.3" x2="764.4" y2="338.7" stroke="#c86a68" stroke-width="0.7" opacity="0.48"/><line x1="693.8" y1="379.7" x2="693.7" y2="400.4" stroke="#d07a70" stroke-width="0.6" opacity="0.59"/><line x1="761.6" y1="383.8" x2="759.4" y2="398.4" stroke="#d07a70" stroke-width="0.6" opacity="0.45"/><line x1="754.8" y1="329.7" x2="752.8" y2="348.8" stroke="#d07a70" stroke-width="0.9" opacity="0.42"/><line x1="716.8" y1="363.3" x2="716.2" y2="383.3" stroke="#b05a70" stroke-width="0.6" opacity="0.36"/><line x1="797.3" y1="333.2" x2="796.9" y2="344.2" stroke="#d07a70" stroke-width="0.9" opacity="0.46"/><line x1="796.8" y1="329.7" x2="794.8" y2="341.4" stroke="#d07a70" stroke-width="0.8" opacity="0.54"/><line x1="734.4" y1="333.1" x2="734.1" y2="353.2" stroke="#b05a70" stroke-width="0.9" opacity="0.48"/><line x1="748.3" y1="376.4" x2="745.4" y2="384.5" stroke="#b05a70" stroke-width="0.6" opacity="0.59"/><line x1="750.2" y1="326.9" x2="749.1" y2="338.5" stroke="#c86a68" stroke-width="0.7" opacity="0.39"/><line x1="763.0" y1="340.5" x2="762.7" y2="352.9" stroke="#d07a70" stroke-width="0.8" opacity="0.45"/><line x1="734.4" y1="347.5" x2="731.8" y2="356.3" stroke="#c86a68" stroke-width="0.7" opacity="0.36"/><line x1="741.3" y1="344.0" x2="739.5" y2="352.6" stroke="#d07a70" stroke-width="0.5" opacity="0.43"/><line x1="734.8" y1="329.8" x2="732.9" y2="347.7" stroke="#d07a70" stroke-width="0.7" opacity="0.50"/><line x1="789.6" y1="366.8" x2="788.6" y2="373.1" stroke="#c86a68" stroke-width="0.6" opacity="0.49"/><line x1="722.5" y1="381.2" x2="720.2" y2="401.7" stroke="#c86a68" stroke-width="0.9" opacity="0.37"/><line x1="715.2" y1="362.2" x2="712.4" y2="373.4" stroke="#b05a70" stroke-width="0.7" opacity="0.51"/><line x1="794.8" y1="362.0" x2="793.7" y2="374.7" stroke="#b05a70" stroke-width="0.5" opacity="0.57"/>
</g>
<polygon points="707,211.6 743.5,259 798.6,251.4 771.5,310 795,365 738.5,352.5 701,395.5 696,332.5 651,299.5 698,272" fill="none" stroke="#a8a8dc" stroke-width="1" opacity="0.8"/>
<g fill="#6070c8" filter="url(#hb)">
<rect x="645" y="209" width="6" height="6"/><rect x="720" y="209" width="6" height="6"/><rect x="795.5" y="209" width="6" height="6"/>
<rect x="645" y="301" width="6" height="6"/><rect x="795.5" y="301" width="6" height="6"/>
<rect x="645" y="394" width="6" height="6"/><rect x="720" y="394" width="6" height="6"/><rect x="795.5" y="394" width="6" height="6"/>
</g>
<path d="M729 304 v6 M726 307 h6" stroke="#9098d8" stroke-width="0.8"/><circle cx="729" cy="307" r="2.2" fill="none" stroke="#9098d8" stroke-width="0.7"/>
</svg>
<!-- bottom toolbar -->
<div class="a" style="left:286.5px;top:505px;width:544px;height:1px;background:#454245"></div>
<div class="a" style="left:286.5px;top:506px;width:544px;height:1px;background:#625f62"></div>
<div class="a" style="left:286.5px;top:527px;width:544px;height:1.5px;background:#bcae80"></div>
<svg class="a" style="left:286px;top:506px" width="544" height="22" viewBox="286 506 544 22">
<defs><linearGradient id="dd" x1="0" y1="0" x2="0" y2="1"><stop offset="0" stop-color="#5e5a5e"/><stop offset="1" stop-color="#4e4b4e"/></linearGradient></defs>
<!-- icon1 -->
<rect x="291.5" y="512" width="12" height="10.5" fill="none" stroke="#d8d6d8" stroke-width="1"/>
<rect x="293.5" y="514" width="8" height="6.5" fill="#3a383a" stroke="#8a878a" stroke-width="0.6"/>
<line x1="297.5" y1="514" x2="297.5" y2="520.5" stroke="#aaa" stroke-width="0.6"/>
<!-- 50% dropdown -->
<rect x="309" y="510.5" width="62" height="14.5" fill="url(#dd)" stroke="#3a383a" stroke-width="1"/>
<line x1="354.5" y1="511" x2="354.5" y2="525" stroke="#454245" stroke-width="1"/>
<path d="M360 515.5 h7 l-3.5 4z" fill="#e8e6e8"/>
<!-- icon2 -->
<rect x="376.5" y="513.5" width="12" height="8" fill="none" stroke="#e0dee0" stroke-width="1.2"/>
<path d="M379.5 517.5 h6 M382.5 515 v5" stroke="#e0dee0" stroke-width="0.8"/>
<path d="M387 525.5 l2.5 -2 v2z" fill="#ddd"/>
<!-- icon3 -->
<rect x="394.5" y="510.5" width="18" height="14.5" fill="#2c2a2c" stroke="#1e1c1e" stroke-width="1"/>
<rect x="398" y="513.5" width="11" height="8.5" fill="none" stroke="#d8d6d8" stroke-width="1" stroke-dasharray="2.5 1.5"/>
<!-- timecode -->
<rect x="416" y="511" width="60.5" height="14" fill="url(#dd)" stroke="#3a383a" stroke-width="1"/>
<!-- camera -->
<rect x="482.5" y="514" width="12.5" height="8.5" fill="#e6e4e6"/><rect x="485" y="512.5" width="4" height="2" fill="#e6e4e6"/>
<circle cx="488.5" cy="518.3" r="2.5" fill="#3a383a"/><circle cx="488.5" cy="518.3" r="1.3" fill="#e6e4e6"/>
<!-- person -->
<circle cx="510" cy="514.5" r="2.3" fill="#6e6b6e"/><path d="M505 524.5 v-4 q0 -3 5 -3 q5 0 5 3 v4z" fill="#6e6b6e"/>
<!-- rgb -->
<circle cx="529.8" cy="515.6" r="3.4" fill="#c8302e"/><circle cx="526.3" cy="520.5" r="3.4" fill="#2ea040"/><circle cx="532.8" cy="520.5" r="3.4" fill="#3a48c8"/>
<path d="M534.5 525.5 l2.5 -2 v2z" fill="#111"/>
<!-- Full dropdown -->
<rect x="542" y="511" width="78.5" height="14" fill="url(#dd)" stroke="#3a383a" stroke-width="1"/>
<line x1="604" y1="511.5" x2="604" y2="525" stroke="#454245" stroke-width="1"/>
<path d="M609 515.5 h7 l-3.5 4z" fill="#e8e6e8"/>
<!-- small icon -->
<rect x="625" y="512.5" width="12.5" height="11" fill="#a8a5a8" stroke="#3a383a" stroke-width="0.8"/>
<rect x="628" y="516" width="6.5" height="4" fill="#1e1c1e"/><rect x="629.5" y="517.2" width="3.5" height="1.6" fill="#ddd"/>
<!-- checker icon -->
<rect x="643" y="510.5" width="17" height="14.5" fill="#2a282a"/>
<rect x="645.5" y="513" width="12" height="9.5" fill="#fff"/>
<g fill="#333"><rect x="645.5" y="513" width="2" height="2"/><rect x="649.5" y="513" width="2" height="2"/><rect x="653.5" y="513" width="2" height="2"/>
<rect x="647.5" y="515" width="2" height="2"/><rect x="651.5" y="515" width="2" height="2"/><rect x="655.5" y="515" width="2" height="2"/>
<rect x="645.5" y="517" width="2" height="2"/><rect x="649.5" y="517" width="2" height="2"/><rect x="653.5" y="517" width="2" height="2"/>
<rect x="647.5" y="519" width="2" height="2"/><rect x="651.5" y="519" width="2" height="2"/><rect x="655.5" y="519" width="2" height="2"/>
<rect x="645.5" y="521" width="2" height="1.5"/><rect x="649.5" y="521" width="2" height="1.5"/><rect x="653.5" y="521" width="2" height="1.5"/></g>
<!-- Active Camera -->
<rect x="664.5" y="510.5" width="96" height="15" fill="url(#dd)" stroke="#3a383a" stroke-width="1"/>
<line x1="745" y1="511" x2="745" y2="525.5" stroke="#454245" stroke-width="1"/>
<path d="M749 515.5 h7 l-3.5 4z" fill="#e8e6e8"/>
<!-- 1 View -->
<rect x="764.5" y="510.5" width="62.5" height="15" fill="url(#dd)" stroke="#3a383a" stroke-width="1"/>
<line x1="810.5" y1="511" x2="810.5" y2="525.5" stroke="#454245" stroke-width="1"/>
<path d="M815 515.5 h7 l-3.5 4z" fill="#e8e6e8"/>
</svg>
<div class="t" style="left:315px;top:512.6px;font-size:10.4px;color:#dcdadc">50%</div>
<div class="t" style="left:421.5px;top:512.8px;font-size:10.6px;color:#dcdadc;letter-spacing:0.1px">0:00:00:00</div>
<div class="t" style="left:548px;top:511.5px;font-size:10.6px;color:#dcdadc">Full</div>
<div class="t" style="left:670px;top:512.6px;font-size:10.4px;color:#dcdadc">Active Camera</div>
<div class="t" style="left:771.5px;top:512.6px;font-size:10.4px;color:#dcdadc">1 View</div>
<div class="a" style="left:286.5px;top:528.5px;width:544px;height:4px;background:#2c2a2c"></div>


<!-- TIMELINE -->
<div class="a" style="left:0;top:528px;width:286px;height:5px;background:#2e2c2e"></div>
<div class="a" style="left:0;top:532.3px;width:830px;height:19px;background:#3a373a"></div>
<div class="a" style="left:0;top:532.3px;width:830px;height:1px;background:#646064"></div>
<div class="a" style="left:112.5px;top:533.2px;width:718px;height:17.5px;background:linear-gradient(#545054,#4c494c);border-left:2px solid #262426;border-bottom:1px solid #2a282a"></div>
<div class="a" style="left:0;top:533.2px;width:37px;height:17.4px;background:#4b484b;border-right:1.5px solid #2a282a;border-bottom:1px solid #2a282a"></div>
<div class="t" style="left:0.5px;top:536.5px;font-size:10.8px;color:#b3b0b3">ueue</div>
<div class="a" style="left:38.5px;top:534px;width:74px;height:17.5px;background:#5a565a"></div>
<svg class="a" style="left:38px;top:534px" width="76" height="18" viewBox="38 534 76 18">
<g fill="#8a878a"><rect x="42" y="537" width="1.2" height="1.2"/><rect x="44" y="537" width="1.2" height="1.2"/><rect x="42" y="539.5" width="1.2" height="1.2"/><rect x="44" y="539.5" width="1.2" height="1.2"/><rect x="42" y="542" width="1.2" height="1.2"/><rect x="44" y="542" width="1.2" height="1.2"/><rect x="42" y="544.5" width="1.2" height="1.2"/><rect x="44" y="544.5" width="1.2" height="1.2"/><rect x="42" y="547" width="1.2" height="1.2"/><rect x="44" y="547" width="1.2" height="1.2"/></g>
<rect x="49" y="537.5" width="10" height="10" fill="#cdbf98" stroke="#3a3632" stroke-width="0.6"/><rect x="49" y="537" width="10" height="1.3" fill="#2a2018"/>
<path d="M104.2 537.5 l6 6.5 M110.2 537.5 l-6 6.5" stroke="#8a878a" stroke-width="1.1"/>
</svg>
<div class="t" style="left:63px;top:537.5px;font-size:10.7px;color:#e4e2e4">Comp 1</div>
<div class="a" style="left:0;top:551.5px;width:830px;height:98.5px;background:#5c585c"></div>
<div class="a" style="left:0;top:551.5px;width:830px;height:1px;background:#6a666a"></div>
<div class="t" style="left:-16.5px;top:559.5px;font-size:15px;font-weight:bold;color:#cca824;transform:scaleY(1.08);transform-origin:0 0">0:00:00</div>
<div class="a" style="left:50px;top:560px;width:178.5px;height:16.5px;background:#a9a5a9;border:1.5px solid #262426"></div>
<svg class="a" style="left:50px;top:560px" width="20" height="17" viewBox="50 560 20 17">
<circle cx="60.3" cy="567" r="3.6" fill="none" stroke="#1e1c1e" stroke-width="1.4"/><line x1="57.5" y1="570" x2="54" y2="573.5" stroke="#1e1c1e" stroke-width="1.8"/>
</svg>
<!-- toolbar icons -->
<svg class="a" style="left:400px;top:552px" width="261" height="33" viewBox="400 552 261 33">
<g fill="#e6e4e6">
<rect x="411" y="562" width="4.5" height="2.6" rx="1"/><rect x="411" y="565.5" width="4.5" height="2.6" rx="1"/><rect x="411" y="569" width="4.5" height="2.6" rx="1"/>
<rect x="426.5" y="562" width="4.5" height="2.6" rx="1"/><rect x="426.5" y="565.5" width="4.5" height="2.6" rx="1"/><rect x="426.5" y="569" width="4.5" height="2.6" rx="1"/>
<rect x="415.5" y="566.2" width="11" height="1.2"/><circle cx="421" cy="566.8" r="1.6"/><rect x="431.5" y="572" width="2" height="1.8"/></g>
<rect x="443" y="557.5" width="21.5" height="22" fill="#3a383a" stroke="#151315" stroke-width="1.2"/>
<rect x="450" y="564.5" width="11" height="10.5" fill="#4a474a" stroke="#a8a5a8" stroke-width="1"/>
<path d="M452 566.5 h7 M452 568.5 h7 M452 570.5 h7 M452 572.5 h7" stroke="#7a777a" stroke-width="0.6"/>
<rect x="445.5" y="560" width="10.5" height="10.5" rx="1" fill="#3a383a" stroke="#d8d6d8" stroke-width="1.2"/>
<circle cx="450.8" cy="565.2" r="2.8" fill="none" stroke="#c8c5c8" stroke-width="0.9"/><circle cx="450.8" cy="565.2" r="1" fill="#c8c5c8"/>
<path d="M469 560 l6 6 M475 560 l-6 6 M468 563 h8 M472 559 v8" stroke="#f0eef0" stroke-width="1"/>
<path d="M475.5 568 l5.5 -3 5.5 3 v7 l-5.5 3 -5.5 -3z" fill="#d0cdd0" stroke="#3a383a" stroke-width="0.8"/>
<path d="M475.5 568 l5.5 3 5.5 -3 M481 571 v7" stroke="#3a383a" stroke-width="0.8" fill="none"/>
<path d="M502 571 h16 v4 h-16z" fill="#a8a5a8"/><path d="M504 569 a6 6 0 0 1 12 0z" fill="#e6e4e6"/><rect x="509" y="566" width="2" height="6" fill="#3a383a"/>
<g fill="#c8c5c8"><rect x="526" y="566" width="2" height="9"/><rect x="529" y="564" width="2" height="11"/><rect x="532" y="562" width="2" height="13"/><rect x="535" y="561" width="2" height="13"/><rect x="538" y="560" width="2" height="13"/></g>
<g stroke="#3a383a" stroke-width="0.7"><line x1="525" y1="567.5" x2="541" y2="565"/><line x1="525" y1="571" x2="541" y2="568.5"/></g>
<rect x="548" y="562" width="18" height="9" rx="4.5" transform="rotate(-40 557 566.5)" fill="#b0adb0" stroke="#777" stroke-width="0.7"/>
<ellipse cx="589.5" cy="566.5" rx="8.5" ry="6.5" fill="#d8d6d8" stroke="#555" stroke-width="0.7"/>
<circle cx="589.5" cy="566" r="3" fill="#f8f8f8"/><rect x="588.5" y="568.5" width="2" height="2.5" fill="#555"/>
<circle cx="583" cy="575" r="1.2" fill="#d8d6d8"/><circle cx="580.5" cy="577.5" r="0.9" fill="#d8d6d8"/>
<circle cx="613.2" cy="568.5" r="5" fill="#9a979a" stroke="#d0ced0" stroke-width="1.4"/><circle cx="613.2" cy="568.5" r="2.5" fill="#777"/>
<rect x="611.5" y="560.5" width="3.5" height="2" fill="#d0ced0"/><path d="M606.5 561 l3 2.5" stroke="#d0ced0" stroke-width="1.2"/>
<rect x="630" y="563" width="17.5" height="11.5" fill="none" stroke="#d0ced0" stroke-width="1" stroke-dasharray="1.6 1"/>
<path d="M630 563 l17 10.5 M633 573 l6 -6 l5 4" stroke="#e6e4e6" stroke-width="1.2" fill="none"/>
</svg>
<!-- header row -->
<div class="a" style="left:0;top:585px;width:661px;height:1.2px;background:#3a383a"></div>
<div class="a" style="left:0;top:586px;width:661px;height:16px;background:linear-gradient(#666266,#5e5a5e)"></div>
<div class="a" style="left:0;top:601.5px;width:830px;height:1.5px;background:#363336"></div>
<svg class="a" style="left:0;top:586px" width="661" height="16" viewBox="0 586 661 16">
<g stroke="#4a474a" stroke-width="1"><line x1="10.5" y1="587" x2="10.5" y2="601"/><line x1="40.5" y1="587" x2="40.5" y2="601"/><line x1="71.5" y1="587" x2="71.5" y2="601"/><line x1="255.5" y1="587" x2="255.5" y2="601"/><line x1="409.5" y1="587" x2="409.5" y2="601"/><line x1="538" y1="587" x2="538" y2="601"/><line x1="646" y1="587" x2="646" y2="601"/></g>
<rect x="-2" y="592" width="6" height="6" fill="#dad8da"/><path d="M-1 592 v-2 a2.5 2.5 0 0 1 5 0 v2" fill="none" stroke="#dad8da" stroke-width="1.2"/>
<path d="M24 594.5 l6.5 -5.5 h5 v5 l-6.5 6z" fill="#e0dee0" stroke="#3a383a" stroke-width="0.8"/><circle cx="33" cy="591" r="1" fill="#555"/><path d="M33 591 q3 -4 5 -2" stroke="#e0dee0" fill="none" stroke-width="0.9"/>
<path d="M415 594 h10 M418 592 a2 2 0 0 1 4 0" stroke="#e0dee0" stroke-width="1.2" fill="none"/><rect x="419.2" y="594" width="1.5" height="2.5" fill="#e0dee0"/>
<circle cx="433.5" cy="594" r="2.5" fill="none" stroke="#e0dee0" stroke-width="1"/>
<path d="M429 594 h2 M436 594 h2 M433.5 589.5 v2 M433.5 596.5 v2 M430.5 591 l1 1 M436.5 597 l-1 -1 M430.5 597 l1 -1 M436.5 591 l-1 1" stroke="#e0dee0" stroke-width="0.9"/>
<path d="M442 588 l12 12" stroke="#e0dee0" stroke-width="1.2" stroke-dasharray="1.5 1"/>
<rect x="471" y="588" width="11" height="12" fill="none" stroke="#e0dee0" stroke-width="1"/><path d="M473 588 v12 M480 588 v12 M473 592 h7 M473 596 h7" stroke="#e0dee0" stroke-width="0.8"/>
<rect x="484" y="590" width="13" height="7" rx="3.5" transform="rotate(-40 490.5 593.5)" fill="#bdbabd" stroke="#e0dee0" stroke-width="0.8"/>
<circle cx="504.5" cy="594" r="5.5" fill="#e0dee0"/><path d="M508.4 590.1 a5.5 5.5 0 0 1 -7.8 7.8z" fill="#222"/>
<path d="M512.5 591 l5.5 -3 5.5 3 v6 l-5.5 3 -5.5 -3z" fill="#c8c5c8" stroke="#555" stroke-width="0.7"/>
</svg>
<div class="t" style="left:457.5px;top:587.5px;font-family:'Liberation Serif',serif;font-style:italic;font-size:12px;color:#e0dde0">fx</div>
<div class="t" style="left:46px;top:589.6px;font-size:8.6px;color:#bdb9bd">#</div>
<div class="t" style="left:76px;top:589.6px;font-size:8.6px;color:#bdb9bd">Source Name</div>
<div class="t" style="left:260px;top:589.6px;font-size:8.6px;color:#bdb9bd">Mode</div>
<div class="t" style="left:331px;top:589.6px;font-size:8.6px;color:#bdb9bd">T</div>
<div class="t" style="left:347px;top:589.6px;font-size:8.6px;color:#bdb9bd">TrkMat</div>
<div class="t" style="left:543px;top:589.6px;font-size:8.6px;color:#bdb9bd">Parent</div>
<!-- layer row -->
<div class="a" style="left:0;top:603px;width:661px;height:15px;background:#5f5b5f"></div>
<div class="a" style="left:0;top:618px;width:661px;height:1px;background:#4a474a"></div>
<div class="a" style="left:0;top:633.5px;width:661px;height:1px;background:#4e4b4e"></div>
<div class="a" style="left:-1px;top:605px;width:7px;height:11px;background:#6a666a;border:1px solid #4a474a"></div>
<svg class="a" style="left:0;top:603px" width="661" height="47" viewBox="0 603 661 47">
<path d="M16 607.5 h6 l-3 4.5z" fill="#8e8b8e"/>
<rect x="27" y="605.5" width="11" height="10.5" fill="#6f86e0" stroke="#3a3a5a" stroke-width="0.6"/>
<path d="M80.5 605 l1.6 3.5 3.8 0.4 -2.9 2.5 0.9 3.7 -3.4 -1.9 -3.4 1.9 0.9 -3.7 -2.9 -2.5 3.8 -0.4z" fill="#f4f4f4" stroke="#1a1a1a" stroke-width="0.9"/>
<rect x="88.5" y="605" width="13" height="12" fill="#5e5a5e" stroke="#d8d6d8" stroke-width="1.2"/><rect x="90" y="606.5" width="10" height="9" fill="none" stroke="#2e2c2e" stroke-width="0.8"/><circle cx="95" cy="611" r="3" fill="#f4f4f4"/>
<rect x="103.5" y="604" width="150.5" height="14" fill="#555155" stroke="#e8e6e8" stroke-width="1.5"/>
<rect x="258.5" y="604.5" width="63.5" height="12.5" fill="url(#dd2)" stroke="#2e2c2e" stroke-width="1"/>
<defs><linearGradient id="dd2" x1="0" y1="0" x2="0" y2="1"><stop offset="0" stop-color="#5e5a5e"/><stop offset="1" stop-color="#4a474a"/></linearGradient></defs>
<line x1="305.3" y1="605" x2="305.3" y2="617" stroke="#3e3b3e" stroke-width="1"/>
<path d="M311 609 h7 l-3.5 4z" fill="#e8e6e8"/>
<path d="M415 611 h10 M418 609 a2 2 0 0 1 4 0" stroke="#e0dee0" stroke-width="1.2" fill="none"/><rect x="419.2" y="611" width="1.5" height="2.5" fill="#e0dee0"/>
<circle cx="434" cy="610.5" r="2.5" fill="none" stroke="#c8c5c8" stroke-width="1"/>
<path d="M429.5 610.5 h2 M436.5 610.5 h2 M434 606 v2 M434 613 v2" stroke="#c8c5c8" stroke-width="0.9"/>
<line x1="442" y1="616.5" x2="454" y2="605" stroke="#f0eef0" stroke-width="1.3"/>
<g fill="#4c494c"><rect x="414" y="617" width="12" height="1"/><rect x="428" y="617" width="12" height="1"/><rect x="441" y="617" width="14" height="1"/></g>
<rect x="484" y="604.5" width="12.5" height="12" fill="#565256" stroke="#4e4b4e" stroke-width="0.8"/>
<rect x="498.5" y="604.5" width="12.5" height="12" fill="#5a565a" stroke="#4e4b4e" stroke-width="0.8"/>
<rect x="512" y="604.5" width="12.5" height="12" fill="#565256" stroke="#4e4b4e" stroke-width="0.8"/>
<path d="M548 611 m-1.5 0 a1.5 1.5 0 1 1 3 0 a3 3 0 1 1 -6 0 a4.5 4.5 0 1 1 9 0" fill="none" stroke="#d8d6d8" stroke-width="1"/>
<rect x="559.5" y="604.5" width="81.5" height="12" fill="url(#dd2)" stroke="#2e2c2e" stroke-width="1"/>
<line x1="624" y1="605" x2="624" y2="616.5" stroke="#3e3b3e" stroke-width="1"/>
<path d="M630 608.5 h7 l-3.5 4z" fill="#e8e6e8"/>
<path d="M31 624.5 h7 l-3.5 5z" fill="#8e8b8e"/>
<path d="M48.5 638 l4.5 3.5 -4.5 3.5z" fill="#8e8b8e"/>
<circle cx="527" cy="626.5" r="5.5" fill="#e0dee0"/><path d="M525 623.5 l4.5 3 -4.5 3z" fill="#333"/>
<rect x="415.5" y="636.5" width="117.5" height="12.5" fill="url(#dd2)" stroke="#2e2c2e" stroke-width="1"/>
<line x1="515.7" y1="637" x2="515.7" y2="649" stroke="#3e3b3e" stroke-width="1"/>
<path d="M521 641 h7 l-3.5 4z" fill="#e8e6e8"/>
</svg>
<div class="t" style="left:47px;top:604.8px;font-size:10.2px;font-weight:bold;color:#e8e6e8">1</div>
<div class="t" style="left:106.5px;top:605px;font-size:10.7px;font-weight:bold;color:#f0eef0">Shape Layer 1</div>
<div class="t" style="left:264.5px;top:605px;font-size:10.6px;color:#e0dde0">Normal</div>
<div class="t" style="left:566px;top:605px;font-size:10.6px;color:#e0dde0">None</div>
<div class="t" style="left:47px;top:620.5px;font-size:10.6px;color:#e0dde0">Contents</div>
<div class="t" style="left:495.5px;top:620.5px;font-size:10.6px;color:#e0dde0">Add:</div>
<div class="t" style="left:62.5px;top:636px;font-size:10.6px;color:#e0dde0">Polystar 1</div>
<div class="t" style="left:421px;top:637.5px;font-size:10.6px;color:#e0dde0">Normal</div>
<!-- time area -->
<div class="a" style="left:661px;top:552.5px;width:169px;height:97.5px;background:#5a565a;border-left:1.5px solid #2e2c2e"></div>
<div class="a" style="left:662.5px;top:551.5px;width:168px;height:6px;background:#4a474a"></div>
<div class="a" style="left:662.5px;top:557.3px;width:168px;height:7.5px;background:#a8a5a8;border-top:1px solid #bdbabd"></div>
<div class="a" style="left:662.5px;top:564.8px;width:168px;height:1.2px;background:#2a282a"></div>
<div class="a" style="left:662.5px;top:566px;width:168px;height:18px;background:#565256"></div>
<div class="a" style="left:662.5px;top:583.8px;width:168px;height:1.2px;background:#2a282a"></div>
<div class="a" style="left:662.5px;top:585px;width:168px;height:16px;background:linear-gradient(#a4a1a4,#8e8b8e);border-top:1px solid #b8b5b8"></div>
<div class="a" style="left:668.8px;top:602px;width:162px;height:16px;background:#7a88d8;border-top:1.5px solid #2a3060;border-bottom:1px solid #4a4878"></div>
<div class="a" style="left:662.5px;top:618px;width:168px;height:1px;background:#4a474a"></div>
<div class="a" style="left:662.5px;top:633.5px;width:168px;height:1px;background:#4e4b4e"></div>
<div class="t" style="left:740.5px;top:568px;font-size:9.6px;color:#e0dde0">02s</div>
<div class="t" style="left:793.5px;top:568px;font-size:9.6px;color:#e0dde0">04s</div>
<div class="t" style="left:666px;top:568px;font-size:9.6px;color:#e0dde0">00s</div>
<div class="a" style="left:748.5px;top:580px;width:1px;height:4px;background:#e0dde0"></div>
<div class="a" style="left:801px;top:580px;width:1px;height:4px;background:#e0dde0"></div>
<svg class="a" style="left:660px;top:552px" width="20" height="98" viewBox="660 552 20 98">
<rect x="662" y="557.5" width="6.5" height="7" rx="1.5" fill="#d09a28"/>
<rect x="662.5" y="585" width="5" height="15" fill="#c9961e" stroke="#2a2010" stroke-width="0.8"/>
<rect x="662.5" y="603" width="6" height="15" fill="#4e4b4e"/>
<line x1="668.5" y1="580" x2="668.5" y2="650" stroke="#b83a3a" stroke-width="1.2"/>
<path d="M662.5 569.5 q0 -2 2 -2 h7 q2 0 2 2 v5 q0 3 -5.5 8 q-5.5 -5 -5.5 -8z" fill="#e8c030" stroke="#9a7010" stroke-width="0.6"/>
<path d="M665.5 571 l1.2 3.5 1.3 -2.5 1.3 2.5 1.2 -3.5" stroke="#a06020" stroke-width="0.9" fill="none"/>
<path d="M665.5 622 h2 v10.5 h-2 M671.5 622 h-2 v10.5 h2 M665.5 637.5 h2 v10.5 h-2 M671.5 637.5 h-2 v10.5 h2" stroke="#f4c8c0" stroke-width="1" fill="none"/>
</svg>
</body></html>
